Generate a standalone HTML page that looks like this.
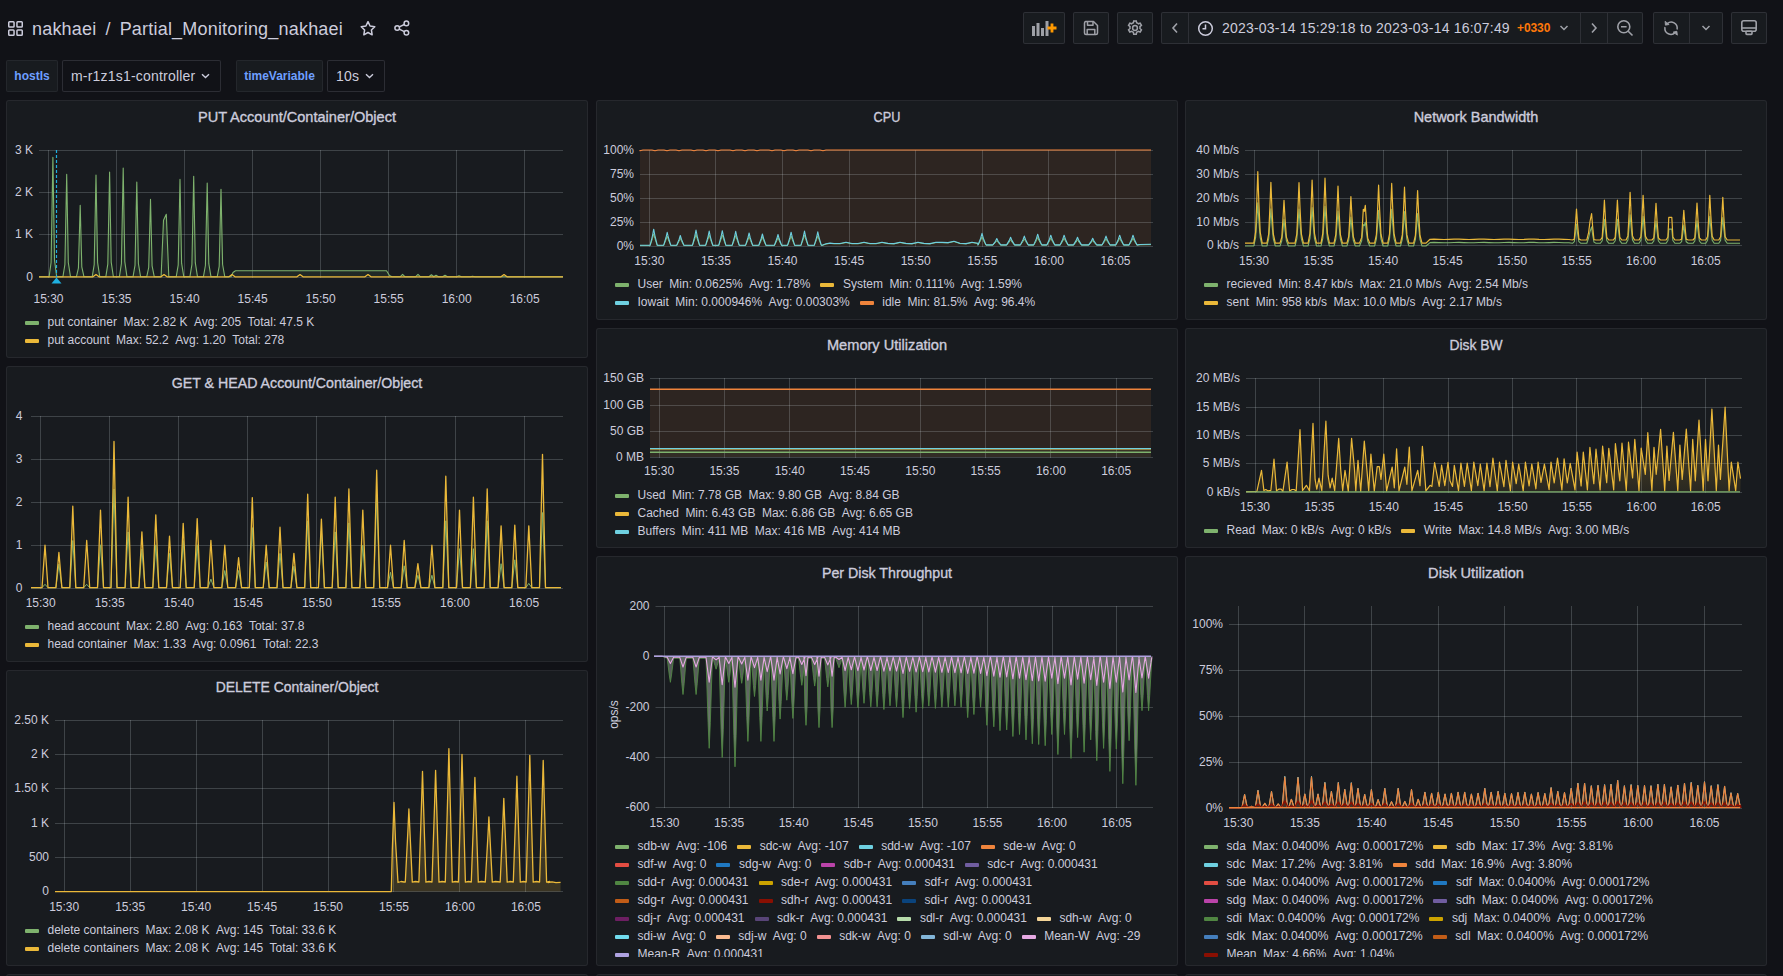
<!DOCTYPE html>
<html><head><meta charset="utf-8"><title>Partial_Monitoring_nakhaei</title>
<style>
html,body{margin:0;padding:0;}
body{width:1783px;height:976px;overflow:hidden;background:#111217;position:relative;font-family:"Liberation Sans", sans-serif;color:#ccccdc;}
.abs{position:absolute;}
.title{left:32px;top:18px;font-size:18px;line-height:22px;white-space:pre;color:#ccccdc;letter-spacing:0.2px}
.btn{position:absolute;top:12px;height:32px;box-sizing:border-box;border:1px solid rgba(204,204,220,0.12);background:#181b1f;border-radius:2px;}
.tp{left:1222px;top:19px;font-size:14px;line-height:18px;white-space:pre;color:#ccccdc;letter-spacing:0.2px}
.tz{left:1517px;top:20px;font-size:12px;line-height:16px;font-weight:bold;color:#FF780A;letter-spacing:-0.1px}
.vlab{position:absolute;top:60px;height:32px;line-height:30px;border:1px solid rgba(204,204,220,0.07);background:#181b1f;border-radius:2px;
 color:#6E9FFF;font-size:12px;font-weight:bold;text-align:center;box-sizing:border-box}
.vsel{position:absolute;top:60px;height:32px;line-height:30px;border:1px solid rgba(204,204,220,0.15);background:#111217;border-radius:2px;
 color:#ccccdc;font-size:14px;padding-left:0;box-sizing:border-box;text-indent:8px;white-space:pre;letter-spacing:0.2px}
.panel{position:absolute;box-sizing:border-box;border:1px solid rgba(204,204,220,0.08);background:#181b1f;border-radius:3px;}
.ptitle{position:absolute;height:20px;line-height:20px;text-align:center;font-size:15px;font-weight:normal;color:#ccccdc;letter-spacing:0px;white-space:pre;-webkit-text-stroke:0.35px #ccccdc;transform:scaleX(0.965)}
svg text{font-family:"Liberation Sans", sans-serif;font-size:12px;fill:#ccccdc;}
.leg{position:absolute;overflow:hidden;font-size:12px;color:#ccccdc;}
.lr{height:18px;line-height:18px;white-space:nowrap;display:flex;align-items:center}
.li{display:inline-flex;align-items:center;margin-right:10px;}
.li i{display:inline-block;width:14px;height:4px;border-radius:1px;margin-right:8.5px;}
.li u{text-decoration:none;position:relative;top:-0.8px;}
.li b{font-weight:normal;margin-left:6.5px;position:relative;top:-0.8px;}
</style></head>
<body>

<svg class="abs" style="left:7.5px;top:20.5px" width="15" height="15" viewBox="0 0 15 15" fill="none" stroke="#ccccdc" stroke-width="1.5">
<rect x="0.75" y="0.75" width="5.3" height="5.3" rx="0.8"/><rect x="8.95" y="0.75" width="5.3" height="5.3" rx="0.8"/>
<rect x="0.75" y="8.95" width="5.3" height="5.3" rx="0.8"/><rect x="8.95" y="8.95" width="5.3" height="5.3" rx="0.8"/></svg>
<div class="abs title">nakhaei<span style="padding:0 9px 0 9px">/</span>Partial_Monitoring_nakhaei</div>
<svg class="abs" style="left:359px;top:20px" width="18" height="17" viewBox="-0.55 -0.5 19.1 18.04" fill="none" stroke="#ccccdc" stroke-width="1.6" stroke-linejoin="round">
<path d="M9 1.3 L11.2 5.9 L16.2 6.6 L12.6 10.1 L13.4 15.2 L9 12.8 L4.6 15.2 L5.4 10.1 L1.8 6.6 L6.8 5.9 Z"/></svg>
<svg class="abs" style="left:393px;top:19px" width="18" height="18" viewBox="0 0 18 18" fill="none" stroke="#ccccdc" stroke-width="1.5">
<circle cx="4.2" cy="9" r="2.3"/><circle cx="13.4" cy="4.4" r="2.3"/><circle cx="13.4" cy="13.7" r="2.3"/>
<path d="M6.3 7.9 L11.3 5.5 M6.3 10.1 L11.3 12.6"/></svg>


<div class="btn" style="left:1023px;width:42px"></div>
<svg class="abs" style="left:1031px;top:20px" width="27" height="17" viewBox="0 0 27 17">
<rect x="1" y="6" width="3" height="10" fill="#9fa1a8"/><rect x="5.5" y="3" width="3" height="13" fill="#9fa1a8"/>
<rect x="10" y="8" width="3" height="8" fill="#9fa1a8"/><rect x="14.5" y="1" width="3" height="15" fill="#9fa1a8"/>
<path d="M21 3.5 V12.5 M16.5 8 H25.5" stroke="#FF9900" stroke-width="2.8"/></svg>
<div class="btn" style="left:1073px;width:36px"></div>
<svg class="abs" style="left:1083px;top:20px" width="16" height="16" viewBox="0 0 16 16" fill="none" stroke="#9fa1a8" stroke-width="1.5" stroke-linejoin="round">
<path d="M2.5 1.5 H10.5 L14.5 5.5 V13 Q14.5 14.5 13 14.5 H3 Q1.5 14.5 1.5 13 V3 Q1.5 1.5 3 1.5 Z"/><path d="M4.5 1.8 V5.3 H10 V1.8"/><path d="M4.2 14.3 V9.5 H11.8 V14.3"/></svg>
<div class="btn" style="left:1117px;width:36px"></div>
<svg class="abs" style="left:1126px;top:19px" width="18" height="18" viewBox="0 0 24 24" fill="none" stroke="#9fa1a8" stroke-width="2">
<circle cx="12" cy="12" r="3.2"/>
<path d="M10.3 2.5 h3.4 l0.5 2.6 a7.5 7.5 0 0 1 2.2 1.3 l2.5-0.9 1.7 2.9-2 1.7 a7.5 7.5 0 0 1 0 2.6 l2 1.7-1.7 2.9-2.5-0.9 a7.5 7.5 0 0 1-2.2 1.3 l-0.5 2.6 h-3.4 l-0.5-2.6 a7.5 7.5 0 0 1-2.2-1.3 l-2.5 0.9-1.7-2.9 2-1.7 a7.5 7.5 0 0 1 0-2.6 l-2-1.7 1.7-2.9 2.5 0.9 a7.5 7.5 0 0 1 2.2-1.3 z"/></svg>
<div class="btn" style="left:1161px;width:482px"></div>
<div class="abs" style="left:1188px;top:13px;width:1px;height:30px;background:rgba(204,204,220,0.12)"></div>
<div class="abs" style="left:1580px;top:13px;width:1px;height:30px;background:rgba(204,204,220,0.12)"></div>
<div class="abs" style="left:1607px;top:13px;width:1px;height:30px;background:rgba(204,204,220,0.12)"></div>
<svg class="abs" style="left:1170px;top:21px" width="10" height="14" viewBox="0 0 10 14" fill="none" stroke="#9fa1a8" stroke-width="1.6"><path d="M7 2.5 L3 7 L7 11.5"/></svg>
<svg class="abs" style="left:1197px;top:20px" width="17" height="17" viewBox="0 0 17 17" fill="none" stroke="#ccccdc" stroke-width="1.5"><circle cx="8.5" cy="8.5" r="6.8"/><path d="M8.5 4.5 V8.8 H5.5"/></svg>
<div class="abs tp">2023-03-14 15:29:18 to 2023-03-14 16:07:49</div>
<div class="abs tz">+0330</div>
<svg class="abs" style="left:1559px;top:24px" width="10" height="8" viewBox="0 0 10 8" fill="none" stroke="#9fa1a8" stroke-width="1.5"><path d="M1.5 2 L5 5.5 L8.5 2"/></svg>
<svg class="abs" style="left:1589px;top:21px" width="10" height="14" viewBox="0 0 10 14" fill="none" stroke="#9fa1a8" stroke-width="1.6"><path d="M3 2.5 L7 7 L3 11.5"/></svg>
<svg class="abs" style="left:1616px;top:19px" width="18" height="18" viewBox="0 0 18 18" fill="none" stroke="#9fa1a8" stroke-width="1.6"><circle cx="7.8" cy="7.8" r="6"/><path d="M5 7.8 H10.6 M12.2 12.2 L16.5 16.5"/></svg>
<div class="btn" style="left:1653px;width:70px"></div>
<div class="abs" style="left:1689px;top:13px;width:1px;height:30px;background:rgba(204,204,220,0.12)"></div>
<svg class="abs" style="left:1662px;top:19px" width="18" height="18" viewBox="0 0 24 24" fill="none" stroke="#9fa1a8" stroke-width="2" stroke-linecap="round">
<path d="M7.2 6.0 A8 8 0 0 1 20.2 13.2"/><path d="M3.9 11.5 A8 8 0 0 0 17.6 18.0"/>
<path d="M4.2 3.6 L4.6 8.2 L9.0 7.4 Z" fill="#9fa1a8" stroke-width="1.2" stroke-linejoin="round"/>
<path d="M20.4 21.0 L19.8 16.4 L15.4 17.4 Z" fill="#9fa1a8" stroke-width="1.2" stroke-linejoin="round"/></svg>
<svg class="abs" style="left:1701px;top:24px" width="10" height="8" viewBox="0 0 10 8" fill="none" stroke="#9fa1a8" stroke-width="1.5"><path d="M1.5 2 L5 5.5 L8.5 2"/></svg>
<div class="btn" style="left:1731px;width:36px"></div>
<svg class="abs" style="left:1740px;top:19px" width="18" height="18" viewBox="0 0 18 18" fill="none" stroke="#9fa1a8" stroke-width="1.6">
<rect x="1.8" y="1.8" width="14.4" height="10.4" rx="2"/><path d="M2 9 H16"/><rect x="6" y="12.2" width="6" height="3.2" rx="0.8"/></svg>


<div class="vlab" style="left:6px;width:52px">hostIs</div>
<div class="vsel" style="left:62px;width:159px">m-r1z1s1-controller<svg width="9" height="6" viewBox="0 0 9 6" fill="none" stroke="#ccccdc" stroke-width="1.4" style="position:absolute;left:138px;top:12px"><path d="M1 1.2 L4.5 4.5 L8 1.2"/></svg></div>
<div class="vlab" style="left:236px;width:87px">timeVariable</div>
<div class="vsel" style="left:327px;width:58px">10s<svg width="9" height="6" viewBox="0 0 9 6" fill="none" stroke="#ccccdc" stroke-width="1.4" style="position:absolute;left:37px;top:12px"><path d="M1 1.2 L4.5 4.5 L8 1.2"/></svg></div>

<div class="panel" style="left:6px;top:100px;width:582px;height:258px"></div><div class="ptitle" style="left:6px;top:106.8px;width:582px;transform:scaleX(0.971)">PUT Account/Container/Object</div><div class="panel" style="left:6px;top:366px;width:582px;height:296px"></div><div class="ptitle" style="left:6px;top:372.8px;width:582px;transform:scaleX(0.946)">GET &amp; HEAD Account/Container/Object</div><div class="panel" style="left:6px;top:670px;width:582px;height:296px"></div><div class="ptitle" style="left:6px;top:676.8px;width:582px;transform:scaleX(0.929)">DELETE Container/Object</div><div class="panel" style="left:596px;top:100px;width:582px;height:220px"></div><div class="ptitle" style="left:596px;top:106.8px;width:582px;transform:scaleX(0.845)">CPU</div><div class="panel" style="left:596px;top:328px;width:582px;height:220px"></div><div class="ptitle" style="left:596px;top:334.8px;width:582px;transform:scaleX(0.974)">Memory Utilization</div><div class="panel" style="left:596px;top:556px;width:582px;height:410px"></div><div class="ptitle" style="left:596px;top:562.8px;width:582px;transform:scaleX(0.947)">Per Disk Throughput</div><div class="panel" style="left:1185px;top:100px;width:582px;height:220px"></div><div class="ptitle" style="left:1185px;top:106.8px;width:582px;transform:scaleX(0.965)">Network Bandwidth</div><div class="panel" style="left:1185px;top:328px;width:582px;height:220px"></div><div class="ptitle" style="left:1185px;top:334.8px;width:582px;transform:scaleX(0.923)">Disk BW</div><div class="panel" style="left:1185px;top:556px;width:582px;height:410px"></div><div class="ptitle" style="left:1185px;top:562.8px;width:582px;transform:scaleX(0.974)">Disk Utilization</div><div class="panel" style="left:6px;top:974px;width:582px;height:60px"></div><div class="panel" style="left:596px;top:974px;width:582px;height:60px"></div><div class="panel" style="left:1185px;top:974px;width:582px;height:60px"></div>
<svg class="abs" style="left:0;top:0" width="1783" height="976" viewBox="0 0 1783 976">
<defs><linearGradient id="g1" gradientUnits="userSpaceOnUse" x1="0" y1="150" x2="0" y2="277"><stop offset="0" stop-color="#7EB26D" stop-opacity="0.2"/><stop offset="1" stop-color="#7EB26D" stop-opacity="0.0"/></linearGradient><linearGradient id="g2" gradientUnits="userSpaceOnUse" x1="0" y1="416" x2="0" y2="588"><stop offset="0" stop-color="#EAB839" stop-opacity="0.2"/><stop offset="1" stop-color="#EAB839" stop-opacity="0.02"/></linearGradient><linearGradient id="g3" gradientUnits="userSpaceOnUse" x1="0" y1="720" x2="0" y2="892"><stop offset="0" stop-color="#EAB839" stop-opacity="0.12"/><stop offset="1" stop-color="#EAB839" stop-opacity="0.0"/></linearGradient><linearGradient id="g4" gradientUnits="userSpaceOnUse" x1="0" y1="656" x2="0" y2="770"><stop offset="0" stop-color="#97a096" stop-opacity="0.45"/><stop offset="1" stop-color="#97a096" stop-opacity="0.85"/></linearGradient><linearGradient id="g5" gradientUnits="userSpaceOnUse" x1="0" y1="170" x2="0" y2="246"><stop offset="0" stop-color="#7EB26D" stop-opacity="0.2"/><stop offset="1" stop-color="#7EB26D" stop-opacity="0.05"/></linearGradient><linearGradient id="g6" gradientUnits="userSpaceOnUse" x1="0" y1="420" x2="0" y2="492"><stop offset="0" stop-color="#EAB839" stop-opacity="0.32"/><stop offset="1" stop-color="#EAB839" stop-opacity="0.08"/></linearGradient><linearGradient id="g7" gradientUnits="userSpaceOnUse" x1="0" y1="760" x2="0" y2="808"><stop offset="0" stop-color="#EF843C" stop-opacity="0.45"/><stop offset="1" stop-color="#EF843C" stop-opacity="0.2"/></linearGradient></defs>
<line x1="39" y1="150.5" x2="563" y2="150.5" stroke="rgba(240,250,255,0.18)" stroke-width="1"/>
<text x="33.0" y="154.3" text-anchor="end">3 K</text>
<line x1="39" y1="192.5" x2="563" y2="192.5" stroke="rgba(240,250,255,0.18)" stroke-width="1"/>
<text x="33.0" y="196.4" text-anchor="end">2 K</text>
<line x1="39" y1="234.5" x2="563" y2="234.5" stroke="rgba(240,250,255,0.18)" stroke-width="1"/>
<text x="33.0" y="238.1" text-anchor="end">1 K</text>
<line x1="39" y1="277.5" x2="563" y2="277.5" stroke="rgba(240,250,255,0.18)" stroke-width="1"/>
<text x="33.0" y="280.8" text-anchor="end">0</text>
<line x1="48.5" y1="150.0" x2="48.5" y2="278.0" stroke="rgba(240,250,255,0.18)" stroke-width="1"/>
<text x="48.5" y="302.5" text-anchor="middle">15:30</text>
<line x1="116.5" y1="150.0" x2="116.5" y2="278.0" stroke="rgba(240,250,255,0.18)" stroke-width="1"/>
<text x="116.5" y="302.5" text-anchor="middle">15:35</text>
<line x1="184.5" y1="150.0" x2="184.5" y2="278.0" stroke="rgba(240,250,255,0.18)" stroke-width="1"/>
<text x="184.6" y="302.5" text-anchor="middle">15:40</text>
<line x1="252.5" y1="150.0" x2="252.5" y2="278.0" stroke="rgba(240,250,255,0.18)" stroke-width="1"/>
<text x="252.6" y="302.5" text-anchor="middle">15:45</text>
<line x1="320.5" y1="150.0" x2="320.5" y2="278.0" stroke="rgba(240,250,255,0.18)" stroke-width="1"/>
<text x="320.6" y="302.5" text-anchor="middle">15:50</text>
<line x1="388.5" y1="150.0" x2="388.5" y2="278.0" stroke="rgba(240,250,255,0.18)" stroke-width="1"/>
<text x="388.6" y="302.5" text-anchor="middle">15:55</text>
<line x1="456.5" y1="150.0" x2="456.5" y2="278.0" stroke="rgba(240,250,255,0.18)" stroke-width="1"/>
<text x="456.7" y="302.5" text-anchor="middle">16:00</text>
<line x1="524.5" y1="150.0" x2="524.5" y2="278.0" stroke="rgba(240,250,255,0.18)" stroke-width="1"/>
<text x="524.7" y="302.5" text-anchor="middle">16:05</text>
<polygon points="39.0,276.8 39.0,276.8 49.1,276.8 51.1,262.4 52.9,157.2 54.5,260.1 56.7,276.8 62.9,276.8 64.9,264.5 66.7,174.4 68.3,262.5 70.5,276.8 76.4,276.8 78.4,268.2 80.2,205.3 81.8,266.8 84.0,276.8 92.2,276.8 94.2,264.6 96.0,175.1 97.6,262.6 99.8,276.8 105.8,276.8 107.8,264.2 109.6,172.0 111.2,262.1 113.4,276.8 119.4,276.8 121.4,263.7 123.2,168.0 124.8,261.6 127.0,276.8 133.0,276.8 135.0,265.4 136.8,182.0 138.4,263.5 140.6,276.8 146.7,276.8 148.7,267.5 150.5,199.2 152.1,265.9 154.3,276.8 161.1,276.8 163.5,220.3 166.3,214.2 168.8,276.8 176.2,276.8 178.2,265.1 180.0,179.4 181.6,263.2 183.8,276.8 189.9,276.8 191.9,264.7 193.7,176.3 195.3,262.7 197.5,276.8 203.4,276.8 205.4,265.5 207.2,183.0 208.8,263.7 211.0,276.8 217.2,276.8 219.2,266.3 221.0,189.2 222.6,264.5 224.8,276.8 231.0,276.8 233.0,272.5 235.5,270.7 386.5,270.7 389.5,275.5 392.0,276.8 400.1,276.8 402.6,274.3 405.1,276.8 415.5,276.8 418.0,274.3 420.5,276.8 428.9,276.8 431.4,274.8 433.9,276.8 433.5,276.8 436.0,275.3 438.5,276.8 442.5,276.8 445.0,275.3 447.5,276.8 456.5,276.8 459.0,275.8 461.5,276.8 470.1,276.8 472.6,276.2 475.1,276.8 563.0,276.8 563.0,276.8" fill="#7EB26D" fill-opacity="0.09" stroke="none"/>
<polygon points="39.0,276.8 39.0,276.8 49.1,276.8 51.1,262.4 52.9,157.2 54.5,260.1 56.7,276.8 62.9,276.8 64.9,264.5 66.7,174.4 68.3,262.5 70.5,276.8 76.4,276.8 78.4,268.2 80.2,205.3 81.8,266.8 84.0,276.8 92.2,276.8 94.2,264.6 96.0,175.1 97.6,262.6 99.8,276.8 105.8,276.8 107.8,264.2 109.6,172.0 111.2,262.1 113.4,276.8 119.4,276.8 121.4,263.7 123.2,168.0 124.8,261.6 127.0,276.8 133.0,276.8 135.0,265.4 136.8,182.0 138.4,263.5 140.6,276.8 146.7,276.8 148.7,267.5 150.5,199.2 152.1,265.9 154.3,276.8 161.1,276.8 163.5,220.3 166.3,214.2 168.8,276.8 176.2,276.8 178.2,265.1 180.0,179.4 181.6,263.2 183.8,276.8 189.9,276.8 191.9,264.7 193.7,176.3 195.3,262.7 197.5,276.8 203.4,276.8 205.4,265.5 207.2,183.0 208.8,263.7 211.0,276.8 217.2,276.8 219.2,266.3 221.0,189.2 222.6,264.5 224.8,276.8 231.0,276.8 233.0,272.5 235.5,270.7 386.5,270.7 389.5,275.5 392.0,276.8 400.1,276.8 402.6,274.3 405.1,276.8 415.5,276.8 418.0,274.3 420.5,276.8 428.9,276.8 431.4,274.8 433.9,276.8 433.5,276.8 436.0,275.3 438.5,276.8 442.5,276.8 445.0,275.3 447.5,276.8 456.5,276.8 459.0,275.8 461.5,276.8 470.1,276.8 472.6,276.2 475.1,276.8 563.0,276.8 563.0,276.8" fill="url(#g1)" stroke="none"/>
<polyline points="39.0,276.8 49.1,276.8 51.1,262.4 52.9,157.2 54.5,260.1 56.7,276.8 62.9,276.8 64.9,264.5 66.7,174.4 68.3,262.5 70.5,276.8 76.4,276.8 78.4,268.2 80.2,205.3 81.8,266.8 84.0,276.8 92.2,276.8 94.2,264.6 96.0,175.1 97.6,262.6 99.8,276.8 105.8,276.8 107.8,264.2 109.6,172.0 111.2,262.1 113.4,276.8 119.4,276.8 121.4,263.7 123.2,168.0 124.8,261.6 127.0,276.8 133.0,276.8 135.0,265.4 136.8,182.0 138.4,263.5 140.6,276.8 146.7,276.8 148.7,267.5 150.5,199.2 152.1,265.9 154.3,276.8 161.1,276.8 163.5,220.3 166.3,214.2 168.8,276.8 176.2,276.8 178.2,265.1 180.0,179.4 181.6,263.2 183.8,276.8 189.9,276.8 191.9,264.7 193.7,176.3 195.3,262.7 197.5,276.8 203.4,276.8 205.4,265.5 207.2,183.0 208.8,263.7 211.0,276.8 217.2,276.8 219.2,266.3 221.0,189.2 222.6,264.5 224.8,276.8 231.0,276.8 233.0,272.5 235.5,270.7 386.5,270.7 389.5,275.5 392.0,276.8 400.1,276.8 402.6,274.3 405.1,276.8 415.5,276.8 418.0,274.3 420.5,276.8 428.9,276.8 431.4,274.8 433.9,276.8 433.5,276.8 436.0,275.3 438.5,276.8 442.5,276.8 445.0,275.3 447.5,276.8 456.5,276.8 459.0,275.8 461.5,276.8 470.1,276.8 472.6,276.2 475.1,276.8 563.0,276.8" fill="none" stroke="#7EB26D" stroke-width="1.1" stroke-linejoin="round" />
<polyline points="39.0,276.8 93.0,276.8 96.0,274.6 99.0,276.8 161.0,276.8 164.0,274.6 167.0,276.8 229.0,276.8 232.0,274.6 235.0,276.8 297.0,276.8 300.0,274.6 303.0,276.8 365.0,276.8 368.0,274.6 371.0,276.8 501.0,276.8 504.0,274.6 507.0,276.8 563.0,276.8" fill="none" stroke="#EAB839" stroke-width="1.3" stroke-linejoin="round" />
<line x1="56.5" y1="150" x2="56.5" y2="277" stroke="#1fb0e0" stroke-width="1.2" stroke-dasharray="3,2"/>
<polygon points="51.5,283.5 61.5,283.5 56.5,277.5" fill="#1fb0e0"/>
<line x1="31" y1="416.5" x2="563" y2="416.5" stroke="rgba(240,250,255,0.18)" stroke-width="1"/>
<text x="22.5" y="419.8" text-anchor="end">4</text>
<line x1="31" y1="459.5" x2="563" y2="459.5" stroke="rgba(240,250,255,0.18)" stroke-width="1"/>
<text x="22.5" y="463.0" text-anchor="end">3</text>
<line x1="31" y1="502.5" x2="563" y2="502.5" stroke="rgba(240,250,255,0.18)" stroke-width="1"/>
<text x="22.5" y="506.0" text-anchor="end">2</text>
<line x1="31" y1="545.5" x2="563" y2="545.5" stroke="rgba(240,250,255,0.18)" stroke-width="1"/>
<text x="22.5" y="549.0" text-anchor="end">1</text>
<line x1="31" y1="588.5" x2="563" y2="588.5" stroke="rgba(240,250,255,0.18)" stroke-width="1"/>
<text x="22.5" y="591.7" text-anchor="end">0</text>
<line x1="40.5" y1="416.0" x2="40.5" y2="589.0" stroke="rgba(240,250,255,0.18)" stroke-width="1"/>
<text x="40.7" y="606.5" text-anchor="middle">15:30</text>
<line x1="109.5" y1="416.0" x2="109.5" y2="589.0" stroke="rgba(240,250,255,0.18)" stroke-width="1"/>
<text x="109.7" y="606.5" text-anchor="middle">15:35</text>
<line x1="178.5" y1="416.0" x2="178.5" y2="589.0" stroke="rgba(240,250,255,0.18)" stroke-width="1"/>
<text x="178.8" y="606.5" text-anchor="middle">15:40</text>
<line x1="247.5" y1="416.0" x2="247.5" y2="589.0" stroke="rgba(240,250,255,0.18)" stroke-width="1"/>
<text x="247.9" y="606.5" text-anchor="middle">15:45</text>
<line x1="316.5" y1="416.0" x2="316.5" y2="589.0" stroke="rgba(240,250,255,0.18)" stroke-width="1"/>
<text x="316.9" y="606.5" text-anchor="middle">15:50</text>
<line x1="385.5" y1="416.0" x2="385.5" y2="589.0" stroke="rgba(240,250,255,0.18)" stroke-width="1"/>
<text x="386.0" y="606.5" text-anchor="middle">15:55</text>
<line x1="455.5" y1="416.0" x2="455.5" y2="589.0" stroke="rgba(240,250,255,0.18)" stroke-width="1"/>
<text x="455.0" y="606.5" text-anchor="middle">16:00</text>
<line x1="524.5" y1="416.0" x2="524.5" y2="589.0" stroke="rgba(240,250,255,0.18)" stroke-width="1"/>
<text x="524.1" y="606.5" text-anchor="middle">16:05</text>
<polygon points="31.0,587.7 31.0,587.7 42.0,587.7 45.0,545.2 48.0,587.7 55.9,587.7 58.9,552.5 61.9,587.7 69.8,587.7 72.8,506.2 75.8,587.7 83.7,587.7 86.7,540.5 89.7,587.7 97.5,587.7 100.5,510.1 103.5,587.7 111.0,587.7 114.0,441.4 117.0,587.7 125.1,587.7 128.1,497.2 131.1,587.7 138.9,587.7 141.9,531.9 144.9,587.7 152.8,587.7 155.8,514.8 158.8,587.7 166.5,587.7 169.5,536.2 172.5,587.7 180.2,587.7 183.2,523.4 186.2,587.7 194.2,587.7 197.2,518.6 200.2,587.7 207.9,587.7 210.9,540.5 213.9,587.7 221.8,587.7 224.8,545.2 227.8,587.7 235.6,587.7 238.6,557.7 241.6,587.7 249.3,587.7 252.3,497.6 255.3,587.7 263.2,587.7 266.2,545.2 269.2,587.7 277.0,587.7 280.0,527.2 283.0,587.7 290.9,587.7 293.9,553.4 296.9,587.7 304.7,587.7 307.7,494.2 310.7,587.7 318.4,587.7 321.4,519.1 324.4,587.7 332.2,587.7 335.2,497.2 338.2,587.7 345.9,587.7 348.9,489.0 351.9,587.7 359.8,587.7 362.8,510.1 365.8,587.7 373.7,587.7 376.7,470.2 379.7,587.7 387.5,587.7 390.5,545.2 393.5,587.7 401.2,587.7 404.2,540.5 407.2,587.7 414.9,587.7 417.9,563.7 420.9,587.7 428.9,587.7 431.9,545.2 434.9,587.7 442.8,587.7 445.8,476.2 448.8,587.7 456.5,587.7 459.5,510.1 462.5,587.7 470.4,587.7 473.4,497.2 476.4,587.7 484.2,587.7 487.2,489.0 490.2,587.7 498.1,587.7 501.1,525.9 504.1,587.7 511.8,587.7 514.8,525.1 517.8,587.7 525.8,587.7 528.8,525.9 531.8,587.7 539.5,587.7 542.5,454.3 545.5,587.7 561.0,587.7 561.0,587.7" fill="url(#g2)" stroke="none"/>
<polyline points="31.0,587.7 42.0,587.7 45.0,584.3 48.0,587.7 55.9,587.7 58.9,564.1 61.9,587.7 69.8,587.7 72.8,540.5 75.8,587.7 83.7,587.7 86.7,584.3 89.7,587.7 97.5,587.7 100.5,544.8 103.5,587.7 111.0,587.7 114.0,489.0 117.0,587.7 125.1,587.7 128.1,531.9 131.1,587.7 138.9,587.7 141.9,549.1 144.9,587.7 152.8,587.7 155.8,544.8 158.8,587.7 166.5,587.7 169.5,553.4 172.5,587.7 180.2,587.7 183.2,540.5 186.2,587.7 194.2,587.7 197.2,544.8 200.2,587.7 207.9,587.7 210.9,579.1 213.9,587.7 221.8,587.7 224.8,570.5 227.8,587.7 235.6,587.7 238.6,570.5 241.6,587.7 249.3,587.7 252.3,527.6 255.3,587.7 263.2,587.7 266.2,562.0 269.2,587.7 277.0,587.7 280.0,553.4 283.0,587.7 290.9,587.7 293.9,566.2 296.9,587.7 304.7,587.7 307.7,520.8 310.7,587.7 318.4,587.7 321.4,531.1 324.4,587.7 332.2,587.7 335.2,531.9 338.2,587.7 345.9,587.7 348.9,522.9 351.9,587.7 359.8,587.7 362.8,545.2 365.8,587.7 373.7,587.7 376.7,494.2 379.7,587.7 387.5,587.7 390.5,572.3 393.5,587.7 401.2,587.7 404.2,565.8 407.2,587.7 414.9,587.7 417.9,575.3 420.9,587.7 428.9,587.7 431.9,575.3 434.9,587.7 442.8,587.7 445.8,520.8 448.8,587.7 456.5,587.7 459.5,548.7 462.5,587.7 470.4,587.7 473.4,548.7 476.4,587.7 484.2,587.7 487.2,520.8 490.2,587.7 498.1,587.7 501.1,563.7 504.1,587.7 511.8,587.7 514.8,559.8 517.8,587.7 525.8,587.7 528.8,583.4 531.8,587.7 539.5,587.7 542.5,512.6 545.5,587.7 561.0,587.7" fill="none" stroke="#7EB26D" stroke-width="1.0" stroke-linejoin="round" />
<polyline points="31.0,587.7 42.0,587.7 45.0,545.2 48.0,587.7 55.9,587.7 58.9,552.5 61.9,587.7 69.8,587.7 72.8,506.2 75.8,587.7 83.7,587.7 86.7,540.5 89.7,587.7 97.5,587.7 100.5,510.1 103.5,587.7 111.0,587.7 114.0,441.4 117.0,587.7 125.1,587.7 128.1,497.2 131.1,587.7 138.9,587.7 141.9,531.9 144.9,587.7 152.8,587.7 155.8,514.8 158.8,587.7 166.5,587.7 169.5,536.2 172.5,587.7 180.2,587.7 183.2,523.4 186.2,587.7 194.2,587.7 197.2,518.6 200.2,587.7 207.9,587.7 210.9,540.5 213.9,587.7 221.8,587.7 224.8,545.2 227.8,587.7 235.6,587.7 238.6,557.7 241.6,587.7 249.3,587.7 252.3,497.6 255.3,587.7 263.2,587.7 266.2,545.2 269.2,587.7 277.0,587.7 280.0,527.2 283.0,587.7 290.9,587.7 293.9,553.4 296.9,587.7 304.7,587.7 307.7,494.2 310.7,587.7 318.4,587.7 321.4,519.1 324.4,587.7 332.2,587.7 335.2,497.2 338.2,587.7 345.9,587.7 348.9,489.0 351.9,587.7 359.8,587.7 362.8,510.1 365.8,587.7 373.7,587.7 376.7,470.2 379.7,587.7 387.5,587.7 390.5,545.2 393.5,587.7 401.2,587.7 404.2,540.5 407.2,587.7 414.9,587.7 417.9,563.7 420.9,587.7 428.9,587.7 431.9,545.2 434.9,587.7 442.8,587.7 445.8,476.2 448.8,587.7 456.5,587.7 459.5,510.1 462.5,587.7 470.4,587.7 473.4,497.2 476.4,587.7 484.2,587.7 487.2,489.0 490.2,587.7 498.1,587.7 501.1,525.9 504.1,587.7 511.8,587.7 514.8,525.1 517.8,587.7 525.8,587.7 528.8,525.9 531.8,587.7 539.5,587.7 542.5,454.3 545.5,587.7 561.0,587.7" fill="none" stroke="#EAB839" stroke-width="1.3" stroke-linejoin="round" />
<line x1="55" y1="720.5" x2="563" y2="720.5" stroke="rgba(240,250,255,0.18)" stroke-width="1"/>
<text x="49.0" y="723.8" text-anchor="end">2.50 K</text>
<line x1="55" y1="754.5" x2="563" y2="754.5" stroke="rgba(240,250,255,0.18)" stroke-width="1"/>
<text x="49.0" y="758.1" text-anchor="end">2 K</text>
<line x1="55" y1="788.5" x2="563" y2="788.5" stroke="rgba(240,250,255,0.18)" stroke-width="1"/>
<text x="49.0" y="792.4" text-anchor="end">1.50 K</text>
<line x1="55" y1="823.5" x2="563" y2="823.5" stroke="rgba(240,250,255,0.18)" stroke-width="1"/>
<text x="49.0" y="826.7" text-anchor="end">1 K</text>
<line x1="55" y1="857.5" x2="563" y2="857.5" stroke="rgba(240,250,255,0.18)" stroke-width="1"/>
<text x="49.0" y="861.0" text-anchor="end">500</text>
<line x1="55" y1="891.5" x2="563" y2="891.5" stroke="rgba(240,250,255,0.18)" stroke-width="1"/>
<text x="49.0" y="895.4" text-anchor="end">0</text>
<line x1="64.5" y1="720.0" x2="64.5" y2="892.0" stroke="rgba(240,250,255,0.18)" stroke-width="1"/>
<text x="64.2" y="910.5" text-anchor="middle">15:30</text>
<line x1="130.5" y1="720.0" x2="130.5" y2="892.0" stroke="rgba(240,250,255,0.18)" stroke-width="1"/>
<text x="130.2" y="910.5" text-anchor="middle">15:35</text>
<line x1="196.5" y1="720.0" x2="196.5" y2="892.0" stroke="rgba(240,250,255,0.18)" stroke-width="1"/>
<text x="196.1" y="910.5" text-anchor="middle">15:40</text>
<line x1="262.5" y1="720.0" x2="262.5" y2="892.0" stroke="rgba(240,250,255,0.18)" stroke-width="1"/>
<text x="262.1" y="910.5" text-anchor="middle">15:45</text>
<line x1="328.5" y1="720.0" x2="328.5" y2="892.0" stroke="rgba(240,250,255,0.18)" stroke-width="1"/>
<text x="328.0" y="910.5" text-anchor="middle">15:50</text>
<line x1="393.5" y1="720.0" x2="393.5" y2="892.0" stroke="rgba(240,250,255,0.18)" stroke-width="1"/>
<text x="394.0" y="910.5" text-anchor="middle">15:55</text>
<line x1="459.5" y1="720.0" x2="459.5" y2="892.0" stroke="rgba(240,250,255,0.18)" stroke-width="1"/>
<text x="459.9" y="910.5" text-anchor="middle">16:00</text>
<line x1="525.5" y1="720.0" x2="525.5" y2="892.0" stroke="rgba(240,250,255,0.18)" stroke-width="1"/>
<text x="525.9" y="910.5" text-anchor="middle">16:05</text>
<polygon points="55.0,891.6 55.0,891.6 391.3,891.6 392.3,850.0 394.0,802.5 395.5,841.0 398.0,882.5 401.0,881.5 404.0,882.0 405.3,882.0 407.9,830.9 408.9,809.0 409.9,830.9 412.3,882.2 415.4,881.5 418.9,882.0 421.5,804.5 422.5,771.3 423.5,804.5 425.9,882.2 429.0,881.5 432.0,882.0 434.6,803.8 435.6,770.3 436.6,803.8 439.0,882.2 442.1,881.5 445.3,882.0 447.9,788.6 448.9,748.6 449.9,788.6 452.3,882.2 455.4,881.5 458.4,882.0 461.0,792.6 462.0,754.3 463.0,792.6 465.4,882.2 468.5,881.5 471.3,882.0 473.9,808.9 474.9,777.5 475.9,808.9 478.3,882.2 481.4,881.5 485.3,882.0 487.9,836.4 488.9,816.8 489.9,836.4 492.3,882.2 495.4,881.5 500.2,882.0 502.8,823.5 503.8,798.4 504.8,823.5 507.2,882.2 510.3,881.5 513.3,882.0 515.9,807.9 516.9,776.2 517.9,807.9 520.3,882.2 523.4,881.5 526.2,882.0 528.8,793.3 529.8,755.3 530.8,793.3 533.2,882.2 536.3,881.5 539.6,882.0 542.2,797.0 543.2,760.5 544.2,797.0 546.6,882.2 549.7,881.5 548.0,882.5 552.0,881.8 556.0,882.6 560.6,882.4 560.6,891.6" fill="#EAB839" fill-opacity="0.16" stroke="none"/>
<polygon points="55.0,891.6 55.0,891.6 391.3,891.6 392.3,850.0 394.0,802.5 395.5,841.0 398.0,882.5 401.0,881.5 404.0,882.0 405.3,882.0 407.9,830.9 408.9,809.0 409.9,830.9 412.3,882.2 415.4,881.5 418.9,882.0 421.5,804.5 422.5,771.3 423.5,804.5 425.9,882.2 429.0,881.5 432.0,882.0 434.6,803.8 435.6,770.3 436.6,803.8 439.0,882.2 442.1,881.5 445.3,882.0 447.9,788.6 448.9,748.6 449.9,788.6 452.3,882.2 455.4,881.5 458.4,882.0 461.0,792.6 462.0,754.3 463.0,792.6 465.4,882.2 468.5,881.5 471.3,882.0 473.9,808.9 474.9,777.5 475.9,808.9 478.3,882.2 481.4,881.5 485.3,882.0 487.9,836.4 488.9,816.8 489.9,836.4 492.3,882.2 495.4,881.5 500.2,882.0 502.8,823.5 503.8,798.4 504.8,823.5 507.2,882.2 510.3,881.5 513.3,882.0 515.9,807.9 516.9,776.2 517.9,807.9 520.3,882.2 523.4,881.5 526.2,882.0 528.8,793.3 529.8,755.3 530.8,793.3 533.2,882.2 536.3,881.5 539.6,882.0 542.2,797.0 543.2,760.5 544.2,797.0 546.6,882.2 549.7,881.5 548.0,882.5 552.0,881.8 556.0,882.6 560.6,882.4 560.6,891.6" fill="url(#g3)" stroke="none"/>
<polyline points="55.0,891.6 391.3,891.6 392.3,850.0 394.0,802.5 395.5,841.0 398.0,882.5 401.0,881.5 404.0,882.0 405.3,882.0 407.9,830.9 408.9,809.0 409.9,830.9 412.3,882.2 415.4,881.5 418.9,882.0 421.5,804.5 422.5,771.3 423.5,804.5 425.9,882.2 429.0,881.5 432.0,882.0 434.6,803.8 435.6,770.3 436.6,803.8 439.0,882.2 442.1,881.5 445.3,882.0 447.9,788.6 448.9,748.6 449.9,788.6 452.3,882.2 455.4,881.5 458.4,882.0 461.0,792.6 462.0,754.3 463.0,792.6 465.4,882.2 468.5,881.5 471.3,882.0 473.9,808.9 474.9,777.5 475.9,808.9 478.3,882.2 481.4,881.5 485.3,882.0 487.9,836.4 488.9,816.8 489.9,836.4 492.3,882.2 495.4,881.5 500.2,882.0 502.8,823.5 503.8,798.4 504.8,823.5 507.2,882.2 510.3,881.5 513.3,882.0 515.9,807.9 516.9,776.2 517.9,807.9 520.3,882.2 523.4,881.5 526.2,882.0 528.8,793.3 529.8,755.3 530.8,793.3 533.2,882.2 536.3,881.5 539.6,882.0 542.2,797.0 543.2,760.5 544.2,797.0 546.6,882.2 549.7,881.5 548.0,882.5 552.0,881.8 556.0,882.6 560.6,882.4" fill="none" stroke="#EAB839" stroke-width="1.3" stroke-linejoin="round" />
<rect x="640" y="150" width="511" height="96" fill="#EF843C" fill-opacity="0.1"/>
<line x1="640" y1="150.5" x2="1153" y2="150.5" stroke="rgba(240,250,255,0.18)" stroke-width="1"/>
<text x="634.0" y="153.6" text-anchor="end">100%</text>
<line x1="640" y1="174.5" x2="1153" y2="174.5" stroke="rgba(240,250,255,0.18)" stroke-width="1"/>
<text x="634.0" y="177.9" text-anchor="end">75%</text>
<line x1="640" y1="198.5" x2="1153" y2="198.5" stroke="rgba(240,250,255,0.18)" stroke-width="1"/>
<text x="634.0" y="202.0" text-anchor="end">50%</text>
<line x1="640" y1="222.5" x2="1153" y2="222.5" stroke="rgba(240,250,255,0.18)" stroke-width="1"/>
<text x="634.0" y="226.2" text-anchor="end">25%</text>
<line x1="640" y1="246.5" x2="1153" y2="246.5" stroke="rgba(240,250,255,0.18)" stroke-width="1"/>
<text x="634.0" y="250.0" text-anchor="end">0%</text>
<line x1="649.5" y1="150.0" x2="649.5" y2="247.0" stroke="rgba(240,250,255,0.18)" stroke-width="1"/>
<text x="649.3" y="264.5" text-anchor="middle">15:30</text>
<line x1="715.5" y1="150.0" x2="715.5" y2="247.0" stroke="rgba(240,250,255,0.18)" stroke-width="1"/>
<text x="715.9" y="264.5" text-anchor="middle">15:35</text>
<line x1="782.5" y1="150.0" x2="782.5" y2="247.0" stroke="rgba(240,250,255,0.18)" stroke-width="1"/>
<text x="782.5" y="264.5" text-anchor="middle">15:40</text>
<line x1="849.5" y1="150.0" x2="849.5" y2="247.0" stroke="rgba(240,250,255,0.18)" stroke-width="1"/>
<text x="849.1" y="264.5" text-anchor="middle">15:45</text>
<line x1="915.5" y1="150.0" x2="915.5" y2="247.0" stroke="rgba(240,250,255,0.18)" stroke-width="1"/>
<text x="915.7" y="264.5" text-anchor="middle">15:50</text>
<line x1="982.5" y1="150.0" x2="982.5" y2="247.0" stroke="rgba(240,250,255,0.18)" stroke-width="1"/>
<text x="982.3" y="264.5" text-anchor="middle">15:55</text>
<line x1="1048.5" y1="150.0" x2="1048.5" y2="247.0" stroke="rgba(240,250,255,0.18)" stroke-width="1"/>
<text x="1048.9" y="264.5" text-anchor="middle">16:00</text>
<line x1="1115.5" y1="150.0" x2="1115.5" y2="247.0" stroke="rgba(240,250,255,0.18)" stroke-width="1"/>
<text x="1115.5" y="264.5" text-anchor="middle">16:05</text>
<polyline points="640.0,150.0 640.0,150.7 643.0,150.0 646.0,150.0 649.0,150.0 652.0,150.0 655.0,150.7 658.0,150.0 661.0,150.0 664.0,150.0 667.0,150.7 670.0,150.0 673.0,150.0 676.0,150.0 679.0,150.7 682.0,150.0 685.0,150.0 688.0,150.0 691.0,150.0 694.0,150.7 697.0,150.0 700.0,150.0 703.0,150.0 706.0,150.7 709.0,150.0 712.0,150.0 715.0,150.0 718.0,150.7 721.0,150.0 724.0,150.0 727.0,150.0 730.0,150.0 733.0,150.7 736.0,150.0 739.0,150.0 742.0,150.0 745.0,150.7 748.0,150.0 751.0,150.0 754.0,150.0 757.0,150.7 760.0,150.0 763.0,150.0 766.0,150.0 769.0,150.0 772.0,150.7 775.0,150.0 778.0,150.0 781.0,150.0 784.0,150.7 787.0,150.0 790.0,150.0 793.0,150.0 796.0,150.7 799.0,150.0 802.0,150.0 805.0,150.0 808.0,150.0 811.0,150.7 814.0,150.0 817.0,150.0 820.0,150.0 823.0,150.7 826.0,150.0 829.0,150.0 832.0,150.0 835.0,150.0 838.0,150.0 841.0,150.0 844.0,150.0 847.0,150.0 850.0,150.0 853.0,150.0 856.0,150.0 859.0,150.0 862.0,150.0 865.0,150.0 868.0,150.0 871.0,150.0 874.0,150.0 877.0,150.0 880.0,150.0 883.0,150.0 886.0,150.0 889.0,150.0 892.0,150.0 895.0,150.0 898.0,150.0 901.0,150.0 904.0,150.0 907.0,150.0 910.0,150.0 913.0,150.0 916.0,150.0 919.0,150.0 922.0,150.0 925.0,150.0 928.0,150.0 931.0,150.0 934.0,150.0 937.0,150.0 940.0,150.0 943.0,150.0 946.0,150.0 949.0,150.0 952.0,150.0 955.0,150.0 958.0,150.0 961.0,150.0 964.0,150.0 967.0,150.0 970.0,150.0 973.0,150.0 976.0,150.0 979.0,150.0 982.0,150.0 985.0,150.0 988.0,150.0 991.0,150.0 994.0,150.0 997.0,150.0 1000.0,150.0 1003.0,150.0 1006.0,150.0 1009.0,150.0 1012.0,150.0 1015.0,150.0 1018.0,150.0 1021.0,150.0 1024.0,150.0 1027.0,150.0 1030.0,150.0 1033.0,150.0 1036.0,150.0 1039.0,150.0 1042.0,150.0 1045.0,150.0 1048.0,150.0 1051.0,150.0 1054.0,150.0 1057.0,150.0 1060.0,150.0 1063.0,150.0 1066.0,150.0 1069.0,150.0 1072.0,150.0 1075.0,150.0 1078.0,150.0 1081.0,150.0 1084.0,150.0 1087.0,150.0 1090.0,150.0 1093.0,150.0 1096.0,150.0 1099.0,150.0 1102.0,150.0 1105.0,150.0 1108.0,150.0 1111.0,150.0 1114.0,150.0 1117.0,150.0 1120.0,150.0 1123.0,150.0 1126.0,150.0 1129.0,150.0 1132.0,150.0 1135.0,150.0 1138.0,150.0 1141.0,150.0 1144.0,150.0 1147.0,150.0 1150.0,150.0 1151.0,150.0" fill="none" stroke="#EF843C" stroke-width="1.15" stroke-linejoin="round" />
<polyline points="640.0,245.6 650.1,245.6 652.5,238.5 653.7,233.8 654.9,238.5 657.3,245.6 663.6,245.6 666.0,239.9 667.2,236.0 668.4,239.9 670.8,245.6 676.7,245.6 679.1,241.2 680.3,238.3 681.5,241.2 683.9,245.6 692.4,245.6 694.8,238.9 696.0,234.4 697.2,238.9 699.6,245.6 705.6,245.6 708.0,239.3 709.2,235.2 710.4,239.3 712.8,245.6 718.7,245.6 721.1,239.2 722.3,234.9 723.5,239.2 725.9,245.6 732.1,245.6 734.5,239.5 735.7,235.4 736.9,239.5 739.3,245.6 745.5,245.6 747.9,240.2 749.1,236.5 750.3,240.2 752.7,245.6 758.8,245.6 761.2,240.6 762.4,237.2 763.6,240.6 766.0,245.6 774.4,245.6 776.8,240.8 778.0,237.6 779.2,240.8 781.6,245.6 787.5,245.6 789.9,239.8 791.1,236.0 792.3,239.8 794.7,245.6 800.9,245.6 803.3,239.3 804.5,235.2 805.7,239.3 808.1,245.6 814.2,245.6 816.6,239.7 817.8,235.7 819.0,239.7 821.4,245.6 822.0,245.6 826.0,244.1 830.0,243.4 834.0,243.8 840.0,243.8 846.0,242.6 852.0,243.8 858.0,243.8 864.0,242.6 870.0,243.8 876.0,243.8 882.0,242.6 888.0,243.7 894.0,243.9 900.0,242.6 906.0,243.7 912.0,243.9 918.0,242.6 924.0,243.7 930.0,243.9 936.0,242.6 942.0,242.7 948.0,242.9 954.0,241.6 960.0,243.6 966.0,243.9 972.0,242.6 978.0,243.6 978.0,245.2 980.7,240.3 982.0,236.8 983.3,240.3 986.0,245.2 992.8,245.2 995.5,242.6 996.8,240.6 998.1,242.6 1000.8,245.2 1006.6,245.2 1009.3,242.0 1010.6,239.6 1011.9,242.0 1014.6,245.2 1020.3,245.2 1023.0,241.5 1024.3,238.8 1025.6,241.5 1028.3,245.2 1033.7,245.2 1036.4,240.7 1037.7,237.4 1039.0,240.7 1041.7,245.2 1046.8,245.2 1049.5,241.1 1050.8,238.1 1052.1,241.1 1054.8,245.2 1060.1,245.2 1062.8,241.1 1064.1,238.1 1065.4,241.1 1068.1,245.2 1073.5,245.2 1076.2,242.0 1077.5,239.6 1078.8,242.0 1081.5,245.2 1088.7,245.2 1091.4,242.4 1092.7,240.3 1094.0,242.4 1096.7,245.2 1102.0,245.2 1104.7,241.5 1106.0,238.8 1107.3,241.5 1110.0,245.2 1115.7,245.2 1118.4,241.1 1119.7,238.1 1121.0,241.1 1123.7,245.2 1129.0,245.2 1131.7,241.1 1133.0,238.1 1134.3,241.1 1137.0,245.2 1140.0,244.8 1151.0,244.6" fill="none" stroke="#7EB26D" stroke-width="1.0" stroke-linejoin="round" />
<polyline points="640.0,245.3 650.1,245.3 652.5,235.6 653.7,229.2 654.9,235.6 657.3,245.3 663.6,245.3 666.0,237.5 667.2,232.3 668.4,237.5 670.8,245.3 676.7,245.3 679.1,239.4 680.3,235.5 681.5,239.4 683.9,245.3 692.4,245.3 694.8,236.2 696.0,230.1 697.2,236.2 699.6,245.3 705.6,245.3 708.0,236.8 709.2,231.1 710.4,236.8 712.8,245.3 718.7,245.3 721.1,236.5 722.3,230.7 723.5,236.5 725.9,245.3 732.1,245.3 734.5,237.0 735.7,231.4 736.9,237.0 739.3,245.3 745.5,245.3 747.9,237.9 749.1,233.0 750.3,237.9 752.7,245.3 758.8,245.3 761.2,238.5 762.4,234.0 763.6,238.5 766.0,245.3 774.4,245.3 776.8,238.8 778.0,234.5 779.2,238.8 781.6,245.3 787.5,245.3 789.9,237.4 791.1,232.2 792.3,237.4 794.7,245.3 800.9,245.3 803.3,236.8 804.5,231.1 805.7,236.8 808.1,245.3 814.2,245.3 816.6,237.3 817.8,231.9 819.0,237.3 821.4,245.3 822.0,245.3 826.0,243.8 830.0,243.1 834.0,243.5 840.0,243.5 846.0,242.3 852.0,243.5 858.0,243.5 864.0,242.3 870.0,243.5 876.0,243.5 882.0,242.3 888.0,243.4 894.0,243.6 900.0,242.3 906.0,243.4 912.0,243.6 918.0,242.3 924.0,243.4 930.0,243.6 936.0,242.3 942.0,242.4 948.0,242.6 954.0,241.3 960.0,243.3 966.0,243.6 972.0,242.3 978.0,243.3 978.0,244.9 980.7,238.2 982.0,233.4 983.3,238.2 986.0,244.9 992.8,244.9 995.5,241.3 996.8,238.6 998.1,241.3 1000.8,244.9 1006.6,244.9 1009.3,240.4 1010.6,237.2 1011.9,240.4 1014.6,244.9 1020.3,244.9 1023.0,239.8 1024.3,236.1 1025.6,239.8 1028.3,244.9 1033.7,244.9 1036.4,238.6 1037.7,234.2 1039.0,238.6 1041.7,244.9 1046.8,244.9 1049.5,239.2 1050.8,235.2 1052.1,239.2 1054.8,244.9 1060.1,244.9 1062.8,239.2 1064.1,235.2 1065.4,239.2 1068.1,244.9 1073.5,244.9 1076.2,240.4 1077.5,237.2 1078.8,240.4 1081.5,244.9 1088.7,244.9 1091.4,241.1 1092.7,238.3 1094.0,241.1 1096.7,244.9 1102.0,244.9 1104.7,239.8 1106.0,236.1 1107.3,239.8 1110.0,244.9 1115.7,244.9 1118.4,239.2 1119.7,235.2 1121.0,239.2 1123.7,244.9 1129.0,244.9 1131.7,239.2 1133.0,235.2 1134.3,239.2 1137.0,244.9 1140.0,244.5 1151.0,244.3" fill="none" stroke="#6ED0E0" stroke-width="1.1" stroke-linejoin="round" />
<rect x="650" y="389" width="501" height="68" fill="#EF843C" fill-opacity="0.1"/>
<rect x="650" y="449" width="501" height="8" fill="#7EB26D" fill-opacity="0.06"/>
<line x1="650" y1="378.5" x2="1153" y2="378.5" stroke="rgba(240,250,255,0.18)" stroke-width="1"/>
<text x="644.0" y="382.0" text-anchor="end">150 GB</text>
<line x1="650" y1="405.5" x2="1153" y2="405.5" stroke="rgba(240,250,255,0.18)" stroke-width="1"/>
<text x="644.0" y="408.7" text-anchor="end">100 GB</text>
<line x1="650" y1="431.5" x2="1153" y2="431.5" stroke="rgba(240,250,255,0.18)" stroke-width="1"/>
<text x="644.0" y="435.0" text-anchor="end">50 GB</text>
<line x1="650" y1="457.5" x2="1153" y2="457.5" stroke="rgba(240,250,255,0.18)" stroke-width="1"/>
<text x="644.0" y="461.1" text-anchor="end">0 MB</text>
<line x1="659.5" y1="378.0" x2="659.5" y2="458.0" stroke="rgba(240,250,255,0.18)" stroke-width="1"/>
<text x="659.1" y="474.5" text-anchor="middle">15:30</text>
<line x1="724.5" y1="378.0" x2="724.5" y2="458.0" stroke="rgba(240,250,255,0.18)" stroke-width="1"/>
<text x="724.4" y="474.5" text-anchor="middle">15:35</text>
<line x1="789.5" y1="378.0" x2="789.5" y2="458.0" stroke="rgba(240,250,255,0.18)" stroke-width="1"/>
<text x="789.7" y="474.5" text-anchor="middle">15:40</text>
<line x1="855.5" y1="378.0" x2="855.5" y2="458.0" stroke="rgba(240,250,255,0.18)" stroke-width="1"/>
<text x="855.0" y="474.5" text-anchor="middle">15:45</text>
<line x1="920.5" y1="378.0" x2="920.5" y2="458.0" stroke="rgba(240,250,255,0.18)" stroke-width="1"/>
<text x="920.3" y="474.5" text-anchor="middle">15:50</text>
<line x1="985.5" y1="378.0" x2="985.5" y2="458.0" stroke="rgba(240,250,255,0.18)" stroke-width="1"/>
<text x="985.6" y="474.5" text-anchor="middle">15:55</text>
<line x1="1050.5" y1="378.0" x2="1050.5" y2="458.0" stroke="rgba(240,250,255,0.18)" stroke-width="1"/>
<text x="1050.9" y="474.5" text-anchor="middle">16:00</text>
<line x1="1116.5" y1="378.0" x2="1116.5" y2="458.0" stroke="rgba(240,250,255,0.18)" stroke-width="1"/>
<text x="1116.2" y="474.5" text-anchor="middle">16:05</text>
<line x1="650" y1="389.2" x2="1151" y2="389.2" stroke="#EF843C" stroke-width="1.6"/>
<line x1="650" y1="448.7" x2="1151" y2="448.7" stroke="#6ED0E0" stroke-width="1.2"/>
<line x1="650" y1="449.6" x2="1151" y2="449.6" stroke="#EAB839" stroke-width="0.8" stroke-opacity="0.7"/>
<line x1="650" y1="452.3" x2="1151" y2="452.3" stroke="#7EB26D" stroke-width="1.4"/>
<line x1="655.5" y1="606.5" x2="1153" y2="606.5" stroke="rgba(240,250,255,0.18)" stroke-width="1"/>
<text x="649.5" y="609.9" text-anchor="end">200</text>
<line x1="655.5" y1="656.5" x2="1153" y2="656.5" stroke="rgba(240,250,255,0.18)" stroke-width="1"/>
<text x="649.5" y="660.3" text-anchor="end">0</text>
<line x1="655.5" y1="707.5" x2="1153" y2="707.5" stroke="rgba(240,250,255,0.18)" stroke-width="1"/>
<text x="649.5" y="710.7" text-anchor="end">-200</text>
<line x1="655.5" y1="757.5" x2="1153" y2="757.5" stroke="rgba(240,250,255,0.18)" stroke-width="1"/>
<text x="649.5" y="761.1" text-anchor="end">-400</text>
<line x1="655.5" y1="807.5" x2="1153" y2="807.5" stroke="rgba(240,250,255,0.18)" stroke-width="1"/>
<text x="649.5" y="811.4" text-anchor="end">-600</text>
<line x1="664.5" y1="606.0" x2="664.5" y2="808.0" stroke="rgba(240,250,255,0.18)" stroke-width="1"/>
<text x="664.5" y="826.5" text-anchor="middle">15:30</text>
<line x1="729.5" y1="606.0" x2="729.5" y2="808.0" stroke="rgba(240,250,255,0.18)" stroke-width="1"/>
<text x="729.1" y="826.5" text-anchor="middle">15:35</text>
<line x1="793.5" y1="606.0" x2="793.5" y2="808.0" stroke="rgba(240,250,255,0.18)" stroke-width="1"/>
<text x="793.7" y="826.5" text-anchor="middle">15:40</text>
<line x1="858.5" y1="606.0" x2="858.5" y2="808.0" stroke="rgba(240,250,255,0.18)" stroke-width="1"/>
<text x="858.3" y="826.5" text-anchor="middle">15:45</text>
<line x1="922.5" y1="606.0" x2="922.5" y2="808.0" stroke="rgba(240,250,255,0.18)" stroke-width="1"/>
<text x="922.9" y="826.5" text-anchor="middle">15:50</text>
<line x1="987.5" y1="606.0" x2="987.5" y2="808.0" stroke="rgba(240,250,255,0.18)" stroke-width="1"/>
<text x="987.5" y="826.5" text-anchor="middle">15:55</text>
<line x1="1052.5" y1="606.0" x2="1052.5" y2="808.0" stroke="rgba(240,250,255,0.18)" stroke-width="1"/>
<text x="1052.0" y="826.5" text-anchor="middle">16:00</text>
<line x1="1116.5" y1="606.0" x2="1116.5" y2="808.0" stroke="rgba(240,250,255,0.18)" stroke-width="1"/>
<text x="1116.6" y="826.5" text-anchor="middle">16:05</text>
<text transform="translate(617.5,714.5) rotate(-90)" text-anchor="middle">ops/s</text>
<polygon points="654.0,656.3 654.0,656.3 662.0,656.3 667.2,658.3 669.3,675.0 670.4,682.3 671.5,675.0 673.6,658.3 679.8,658.3 681.9,683.8 683.0,694.5 684.1,683.8 686.2,658.3 692.9,658.3 695.0,683.8 696.1,694.5 697.2,683.8 699.3,658.3 706.0,658.3 708.1,722.6 709.2,748.3 710.3,722.6 712.4,658.3 712.9,658.3 715.0,665.6 716.1,669.2 717.2,665.6 719.3,658.3 719.1,658.3 721.1,729.2 722.2,757.5 723.3,729.2 725.3,658.3 725.6,658.3 727.7,675.0 728.8,682.3 729.9,675.0 732.0,658.3 731.9,658.3 733.9,735.8 735.0,766.8 736.1,735.8 738.0,658.3 738.5,658.3 740.6,675.8 741.7,683.3 742.8,675.8 744.9,658.3 744.8,658.3 746.8,717.6 747.9,741.4 749.0,717.6 751.0,658.3 751.3,658.3 753.4,685.3 754.5,696.5 755.6,685.3 757.7,658.3 757.7,658.3 759.8,717.6 760.9,741.4 762.0,717.6 764.1,658.3 764.1,658.3 766.1,695.7 767.2,711.0 768.3,695.7 770.4,658.3 770.8,658.3 772.9,717.6 774.0,741.4 775.1,717.6 777.2,658.3 777.1,658.3 779.0,701.5 780.1,719.1 781.2,701.5 783.2,658.3 783.6,658.3 785.7,687.9 786.8,700.2 787.9,687.9 790.0,658.3 789.8,658.3 791.8,701.0 792.9,718.4 794.0,701.0 796.0,658.3 798.6,658.3 800.7,677.2 801.8,685.3 802.9,677.2 805.0,658.3 803.9,658.3 804.9,706.0 806.0,725.3 807.1,706.0 808.0,658.3 811.5,658.3 813.6,677.8 814.7,686.1 815.8,677.8 817.9,658.3 816.9,658.3 817.9,707.6 819.0,727.6 820.1,707.6 821.2,658.3 824.6,658.3 826.7,678.3 827.8,686.9 828.9,678.3 831.0,658.3 829.9,658.3 831.0,707.6 832.1,727.6 833.2,707.6 834.2,658.3 835.8,658.3 837.9,664.5 839.0,667.7 840.1,664.5 842.2,658.3 842.1,658.3 844.0,693.0 845.1,707.3 846.2,693.0 848.2,658.3 848.2,658.3 850.2,691.0 851.3,704.5 852.4,691.0 854.4,658.3 854.7,658.3 856.8,693.2 857.9,707.6 859.0,693.2 861.1,658.3 861.0,658.3 862.9,690.1 864.0,703.3 865.1,690.1 867.1,658.3 867.6,658.3 869.7,692.7 870.8,706.8 871.9,692.7 874.0,658.3 874.0,658.3 876.0,692.7 877.1,706.8 878.2,692.7 880.3,658.3 880.7,658.3 882.8,694.6 883.9,709.5 885.0,694.6 887.1,658.3 886.9,658.3 888.9,691.9 890.0,705.8 891.1,691.9 893.1,658.3 893.3,658.3 895.4,692.7 896.5,706.9 897.6,692.7 899.7,658.3 899.8,658.3 901.9,700.5 903.0,717.6 904.1,700.5 906.2,658.3 906.4,658.3 908.5,693.8 909.6,708.4 910.7,693.8 912.8,658.3 912.9,658.3 915.0,696.6 916.1,712.2 917.2,696.6 919.3,658.3 919.5,658.3 921.6,693.8 922.7,708.4 923.8,693.8 925.9,658.3 925.7,658.3 927.7,692.2 928.8,706.1 929.9,692.2 931.9,658.3 932.2,658.3 934.3,693.8 935.4,708.4 936.5,693.8 938.6,658.3 938.7,658.3 940.8,692.9 941.9,707.2 943.0,692.9 945.1,658.3 945.1,658.3 947.2,692.9 948.3,707.2 949.4,692.9 951.5,658.3 951.7,658.3 953.8,691.9 954.9,705.8 956.0,691.9 958.1,658.3 958.0,658.3 960.0,692.9 961.1,707.2 962.2,692.9 964.2,658.3 964.5,658.3 966.6,700.5 967.7,717.6 968.8,700.5 970.9,658.3 970.8,658.3 972.8,698.2 973.9,714.5 975.0,698.2 976.9,658.3 977.4,658.3 979.5,692.9 980.6,707.2 981.7,692.9 983.8,658.3 983.8,658.3 985.8,706.0 986.9,725.3 988.0,706.0 990.1,658.3 990.6,658.3 992.7,707.1 993.8,726.8 994.9,707.1 997.0,658.3 996.9,658.3 998.9,709.9 1000.0,730.7 1001.1,709.9 1003.1,658.3 1003.5,658.3 1005.6,709.3 1006.7,729.9 1007.8,709.3 1009.9,658.3 1009.8,658.3 1011.8,714.1 1012.9,736.5 1014.0,714.1 1016.0,658.3 1016.3,658.3 1018.4,712.6 1019.5,734.5 1020.6,712.6 1022.7,658.3 1022.8,658.3 1024.9,716.5 1026.0,739.9 1027.1,716.5 1029.2,658.3 1029.1,658.3 1031.2,719.3 1032.3,743.8 1033.4,719.3 1035.4,658.3 1035.5,658.3 1037.6,719.8 1038.7,744.5 1039.8,719.8 1041.9,658.3 1042.0,658.3 1044.1,720.7 1045.2,745.7 1046.3,720.7 1048.4,658.3 1048.6,658.3 1050.7,712.6 1051.8,734.5 1052.9,712.6 1055.0,658.3 1054.9,658.3 1056.8,727.0 1057.9,754.5 1059.0,727.0 1061.0,658.3 1061.3,658.3 1063.4,712.6 1064.5,734.5 1065.6,712.6 1067.7,658.3 1067.8,658.3 1069.9,729.8 1071.0,758.4 1072.1,729.8 1074.2,658.3 1074.4,658.3 1076.5,714.8 1077.6,737.6 1078.7,714.8 1080.8,658.3 1080.9,658.3 1083.0,725.4 1084.1,752.2 1085.2,725.4 1087.3,658.3 1087.5,658.3 1089.6,716.5 1090.7,739.9 1091.8,716.5 1093.9,658.3 1093.7,658.3 1095.7,731.4 1096.8,760.7 1097.9,731.4 1099.9,658.3 1100.4,658.3 1102.5,722.6 1103.6,748.4 1104.7,722.6 1106.8,658.3 1106.7,658.3 1108.8,739.2 1109.9,771.4 1111.0,739.2 1113.0,658.3 1113.1,658.3 1115.2,723.1 1116.3,749.1 1117.4,723.1 1119.5,658.3 1119.6,658.3 1121.7,748.0 1122.8,783.7 1123.9,748.0 1126.0,658.3 1125.9,658.3 1128.0,717.1 1129.1,740.7 1130.2,717.1 1132.2,658.3 1132.7,658.3 1134.8,749.1 1135.9,785.3 1137.0,749.1 1139.1,658.3 1138.9,658.3 1140.9,695.5 1142.0,710.7 1143.1,695.5 1145.1,658.3 1145.4,658.3 1147.5,695.5 1148.6,710.7 1149.7,695.5 1151.8,658.3 1151.0,666.3 1151.0,656.3" fill="url(#g4)" stroke="none"/>
<polyline points="654.0,656.3 662.0,656.3 667.2,658.3 669.3,675.0 670.4,682.3 671.5,675.0 673.6,658.3 679.8,658.3 681.9,683.8 683.0,694.5 684.1,683.8 686.2,658.3 692.9,658.3 695.0,683.8 696.1,694.5 697.2,683.8 699.3,658.3 706.0,658.3 708.1,722.6 709.2,748.3 710.3,722.6 712.4,658.3 712.9,658.3 715.0,665.6 716.1,669.2 717.2,665.6 719.3,658.3 719.1,658.3 721.1,729.2 722.2,757.5 723.3,729.2 725.3,658.3 725.6,658.3 727.7,675.0 728.8,682.3 729.9,675.0 732.0,658.3 731.9,658.3 733.9,735.8 735.0,766.8 736.1,735.8 738.0,658.3 738.5,658.3 740.6,675.8 741.7,683.3 742.8,675.8 744.9,658.3 744.8,658.3 746.8,717.6 747.9,741.4 749.0,717.6 751.0,658.3 751.3,658.3 753.4,685.3 754.5,696.5 755.6,685.3 757.7,658.3 757.7,658.3 759.8,717.6 760.9,741.4 762.0,717.6 764.1,658.3 764.1,658.3 766.1,695.7 767.2,711.0 768.3,695.7 770.4,658.3 770.8,658.3 772.9,717.6 774.0,741.4 775.1,717.6 777.2,658.3 777.1,658.3 779.0,701.5 780.1,719.1 781.2,701.5 783.2,658.3 783.6,658.3 785.7,687.9 786.8,700.2 787.9,687.9 790.0,658.3 789.8,658.3 791.8,701.0 792.9,718.4 794.0,701.0 796.0,658.3 798.6,658.3 800.7,677.2 801.8,685.3 802.9,677.2 805.0,658.3 803.9,658.3 804.9,706.0 806.0,725.3 807.1,706.0 808.0,658.3 811.5,658.3 813.6,677.8 814.7,686.1 815.8,677.8 817.9,658.3 816.9,658.3 817.9,707.6 819.0,727.6 820.1,707.6 821.2,658.3 824.6,658.3 826.7,678.3 827.8,686.9 828.9,678.3 831.0,658.3 829.9,658.3 831.0,707.6 832.1,727.6 833.2,707.6 834.2,658.3 835.8,658.3 837.9,664.5 839.0,667.7 840.1,664.5 842.2,658.3 842.1,658.3 844.0,693.0 845.1,707.3 846.2,693.0 848.2,658.3 848.2,658.3 850.2,691.0 851.3,704.5 852.4,691.0 854.4,658.3 854.7,658.3 856.8,693.2 857.9,707.6 859.0,693.2 861.1,658.3 861.0,658.3 862.9,690.1 864.0,703.3 865.1,690.1 867.1,658.3 867.6,658.3 869.7,692.7 870.8,706.8 871.9,692.7 874.0,658.3 874.0,658.3 876.0,692.7 877.1,706.8 878.2,692.7 880.3,658.3 880.7,658.3 882.8,694.6 883.9,709.5 885.0,694.6 887.1,658.3 886.9,658.3 888.9,691.9 890.0,705.8 891.1,691.9 893.1,658.3 893.3,658.3 895.4,692.7 896.5,706.9 897.6,692.7 899.7,658.3 899.8,658.3 901.9,700.5 903.0,717.6 904.1,700.5 906.2,658.3 906.4,658.3 908.5,693.8 909.6,708.4 910.7,693.8 912.8,658.3 912.9,658.3 915.0,696.6 916.1,712.2 917.2,696.6 919.3,658.3 919.5,658.3 921.6,693.8 922.7,708.4 923.8,693.8 925.9,658.3 925.7,658.3 927.7,692.2 928.8,706.1 929.9,692.2 931.9,658.3 932.2,658.3 934.3,693.8 935.4,708.4 936.5,693.8 938.6,658.3 938.7,658.3 940.8,692.9 941.9,707.2 943.0,692.9 945.1,658.3 945.1,658.3 947.2,692.9 948.3,707.2 949.4,692.9 951.5,658.3 951.7,658.3 953.8,691.9 954.9,705.8 956.0,691.9 958.1,658.3 958.0,658.3 960.0,692.9 961.1,707.2 962.2,692.9 964.2,658.3 964.5,658.3 966.6,700.5 967.7,717.6 968.8,700.5 970.9,658.3 970.8,658.3 972.8,698.2 973.9,714.5 975.0,698.2 976.9,658.3 977.4,658.3 979.5,692.9 980.6,707.2 981.7,692.9 983.8,658.3 983.8,658.3 985.8,706.0 986.9,725.3 988.0,706.0 990.1,658.3 990.6,658.3 992.7,707.1 993.8,726.8 994.9,707.1 997.0,658.3 996.9,658.3 998.9,709.9 1000.0,730.7 1001.1,709.9 1003.1,658.3 1003.5,658.3 1005.6,709.3 1006.7,729.9 1007.8,709.3 1009.9,658.3 1009.8,658.3 1011.8,714.1 1012.9,736.5 1014.0,714.1 1016.0,658.3 1016.3,658.3 1018.4,712.6 1019.5,734.5 1020.6,712.6 1022.7,658.3 1022.8,658.3 1024.9,716.5 1026.0,739.9 1027.1,716.5 1029.2,658.3 1029.1,658.3 1031.2,719.3 1032.3,743.8 1033.4,719.3 1035.4,658.3 1035.5,658.3 1037.6,719.8 1038.7,744.5 1039.8,719.8 1041.9,658.3 1042.0,658.3 1044.1,720.7 1045.2,745.7 1046.3,720.7 1048.4,658.3 1048.6,658.3 1050.7,712.6 1051.8,734.5 1052.9,712.6 1055.0,658.3 1054.9,658.3 1056.8,727.0 1057.9,754.5 1059.0,727.0 1061.0,658.3 1061.3,658.3 1063.4,712.6 1064.5,734.5 1065.6,712.6 1067.7,658.3 1067.8,658.3 1069.9,729.8 1071.0,758.4 1072.1,729.8 1074.2,658.3 1074.4,658.3 1076.5,714.8 1077.6,737.6 1078.7,714.8 1080.8,658.3 1080.9,658.3 1083.0,725.4 1084.1,752.2 1085.2,725.4 1087.3,658.3 1087.5,658.3 1089.6,716.5 1090.7,739.9 1091.8,716.5 1093.9,658.3 1093.7,658.3 1095.7,731.4 1096.8,760.7 1097.9,731.4 1099.9,658.3 1100.4,658.3 1102.5,722.6 1103.6,748.4 1104.7,722.6 1106.8,658.3 1106.7,658.3 1108.8,739.2 1109.9,771.4 1111.0,739.2 1113.0,658.3 1113.1,658.3 1115.2,723.1 1116.3,749.1 1117.4,723.1 1119.5,658.3 1119.6,658.3 1121.7,748.0 1122.8,783.7 1123.9,748.0 1126.0,658.3 1125.9,658.3 1128.0,717.1 1129.1,740.7 1130.2,717.1 1132.2,658.3 1132.7,658.3 1134.8,749.1 1135.9,785.3 1137.0,749.1 1139.1,658.3 1138.9,658.3 1140.9,695.5 1142.0,710.7 1143.1,695.5 1145.1,658.3 1145.4,658.3 1147.5,695.5 1148.6,710.7 1149.7,695.5 1151.8,658.3 1151.0,666.3" fill="none" stroke="#508642" stroke-width="1.0" stroke-linejoin="round" stroke-opacity="0.9"/>
<polygon points="654.0,656.3 654.0,656.3 662.0,656.3 667.2,657.3 670.4,663.6 673.6,657.3 679.8,657.3 683.0,667.0 686.2,657.3 692.9,657.3 696.1,667.0 699.3,657.3 706.0,657.3 709.2,682.1 712.4,657.3 712.9,657.3 716.1,659.9 719.3,657.3 719.1,657.3 722.2,684.6 725.3,657.3 725.6,657.3 728.8,663.6 732.0,657.3 731.9,657.3 735.0,687.2 738.0,657.3 738.5,657.3 741.7,663.9 744.9,657.3 744.8,657.3 747.9,680.1 751.0,657.3 751.3,657.3 754.5,667.6 757.7,657.3 757.7,657.3 760.9,680.1 764.1,657.3 764.1,657.3 767.2,671.6 770.4,657.3 770.8,657.3 774.0,680.1 777.2,657.3 777.1,657.3 780.1,673.9 783.2,657.3 783.6,657.3 786.8,668.6 790.0,657.3 789.8,657.3 792.9,673.7 796.0,657.3 798.6,657.3 801.8,664.4 805.0,657.3 803.9,657.3 806.0,675.6 808.0,657.3 811.5,657.3 814.7,664.6 817.9,657.3 816.9,657.3 819.0,676.3 821.2,657.3 824.6,657.3 827.8,664.9 831.0,657.3 829.9,657.3 832.1,676.3 834.2,657.3 835.8,657.3 839.0,659.5 842.2,657.3 842.1,657.3 845.1,670.6 848.2,657.3 848.2,657.3 851.3,669.8 854.4,657.3 854.7,657.3 857.9,670.7 861.1,657.3 861.0,657.3 864.0,670.0 867.1,657.3 867.6,657.3 870.8,670.5 874.0,657.3 874.0,657.3 877.1,670.5 880.3,657.3 880.7,657.3 883.9,671.2 887.1,657.3 886.9,657.3 890.0,670.8 893.1,657.3 893.3,657.3 896.5,671.0 899.7,657.3 899.8,657.3 903.0,673.5 906.2,657.3 906.4,657.3 909.6,671.3 912.8,657.3 912.9,657.3 916.1,672.0 919.3,657.3 919.5,657.3 922.7,671.7 925.9,657.3 925.7,657.3 928.8,671.9 931.9,657.3 932.2,657.3 935.4,672.1 938.6,657.3 938.7,657.3 941.9,672.3 945.1,657.3 945.1,657.3 948.3,672.5 951.5,657.3 951.7,657.3 954.9,672.6 958.1,657.3 958.0,657.3 961.1,672.8 964.2,657.3 964.5,657.3 967.7,673.5 970.9,657.3 970.8,657.3 973.9,673.2 976.9,657.3 977.4,657.3 980.6,673.4 983.8,657.3 983.8,657.3 986.9,675.6 990.1,657.3 990.6,657.3 993.8,676.1 997.0,657.3 996.9,657.3 1000.0,677.1 1003.1,657.3 1003.5,657.3 1006.7,676.9 1009.9,657.3 1009.8,657.3 1012.9,678.8 1016.0,657.3 1016.3,657.3 1019.5,678.2 1022.7,657.3 1022.8,657.3 1026.0,679.7 1029.2,657.3 1029.1,657.3 1032.3,680.8 1035.4,657.3 1035.5,657.3 1038.7,681.0 1041.9,657.3 1042.0,657.3 1045.2,681.3 1048.4,657.3 1048.6,657.3 1051.8,678.2 1055.0,657.3 1054.9,657.3 1057.9,683.8 1061.0,657.3 1061.3,657.3 1064.5,678.2 1067.7,657.3 1067.8,657.3 1071.0,684.9 1074.2,657.3 1074.4,657.3 1077.6,679.1 1080.8,657.3 1080.9,657.3 1084.1,683.2 1087.3,657.3 1087.5,657.3 1090.7,679.7 1093.9,657.3 1093.7,657.3 1096.8,685.5 1099.9,657.3 1100.4,657.3 1103.6,682.1 1106.8,657.3 1106.7,657.3 1109.9,688.5 1113.0,657.3 1113.1,657.3 1116.3,682.3 1119.5,657.3 1119.6,657.3 1122.8,692.0 1126.0,657.3 1125.9,657.3 1129.1,679.9 1132.2,657.3 1132.7,657.3 1135.9,692.4 1139.1,657.3 1138.9,657.3 1142.0,678.0 1145.1,657.3 1145.4,657.3 1148.6,678.2 1151.8,657.3 1151.0,662.3 1151.0,656.3" fill="#8a8f86" fill-opacity="0.35" stroke="none"/>
<polyline points="654.0,656.3 662.0,656.3 667.2,657.3 670.4,663.6 673.6,657.3 679.8,657.3 683.0,667.0 686.2,657.3 692.9,657.3 696.1,667.0 699.3,657.3 706.0,657.3 709.2,682.1 712.4,657.3 712.9,657.3 716.1,659.9 719.3,657.3 719.1,657.3 722.2,684.6 725.3,657.3 725.6,657.3 728.8,663.6 732.0,657.3 731.9,657.3 735.0,687.2 738.0,657.3 738.5,657.3 741.7,663.9 744.9,657.3 744.8,657.3 747.9,680.1 751.0,657.3 751.3,657.3 754.5,667.6 757.7,657.3 757.7,657.3 760.9,680.1 764.1,657.3 764.1,657.3 767.2,671.6 770.4,657.3 770.8,657.3 774.0,680.1 777.2,657.3 777.1,657.3 780.1,673.9 783.2,657.3 783.6,657.3 786.8,668.6 790.0,657.3 789.8,657.3 792.9,673.7 796.0,657.3 798.6,657.3 801.8,664.4 805.0,657.3 803.9,657.3 806.0,675.6 808.0,657.3 811.5,657.3 814.7,664.6 817.9,657.3 816.9,657.3 819.0,676.3 821.2,657.3 824.6,657.3 827.8,664.9 831.0,657.3 829.9,657.3 832.1,676.3 834.2,657.3 835.8,657.3 839.0,659.5 842.2,657.3 842.1,657.3 845.1,670.6 848.2,657.3 848.2,657.3 851.3,669.8 854.4,657.3 854.7,657.3 857.9,670.7 861.1,657.3 861.0,657.3 864.0,670.0 867.1,657.3 867.6,657.3 870.8,670.5 874.0,657.3 874.0,657.3 877.1,670.5 880.3,657.3 880.7,657.3 883.9,671.2 887.1,657.3 886.9,657.3 890.0,670.8 893.1,657.3 893.3,657.3 896.5,671.0 899.7,657.3 899.8,657.3 903.0,673.5 906.2,657.3 906.4,657.3 909.6,671.3 912.8,657.3 912.9,657.3 916.1,672.0 919.3,657.3 919.5,657.3 922.7,671.7 925.9,657.3 925.7,657.3 928.8,671.9 931.9,657.3 932.2,657.3 935.4,672.1 938.6,657.3 938.7,657.3 941.9,672.3 945.1,657.3 945.1,657.3 948.3,672.5 951.5,657.3 951.7,657.3 954.9,672.6 958.1,657.3 958.0,657.3 961.1,672.8 964.2,657.3 964.5,657.3 967.7,673.5 970.9,657.3 970.8,657.3 973.9,673.2 976.9,657.3 977.4,657.3 980.6,673.4 983.8,657.3 983.8,657.3 986.9,675.6 990.1,657.3 990.6,657.3 993.8,676.1 997.0,657.3 996.9,657.3 1000.0,677.1 1003.1,657.3 1003.5,657.3 1006.7,676.9 1009.9,657.3 1009.8,657.3 1012.9,678.8 1016.0,657.3 1016.3,657.3 1019.5,678.2 1022.7,657.3 1022.8,657.3 1026.0,679.7 1029.2,657.3 1029.1,657.3 1032.3,680.8 1035.4,657.3 1035.5,657.3 1038.7,681.0 1041.9,657.3 1042.0,657.3 1045.2,681.3 1048.4,657.3 1048.6,657.3 1051.8,678.2 1055.0,657.3 1054.9,657.3 1057.9,683.8 1061.0,657.3 1061.3,657.3 1064.5,678.2 1067.7,657.3 1067.8,657.3 1071.0,684.9 1074.2,657.3 1074.4,657.3 1077.6,679.1 1080.8,657.3 1080.9,657.3 1084.1,683.2 1087.3,657.3 1087.5,657.3 1090.7,679.7 1093.9,657.3 1093.7,657.3 1096.8,685.5 1099.9,657.3 1100.4,657.3 1103.6,682.1 1106.8,657.3 1106.7,657.3 1109.9,688.5 1113.0,657.3 1113.1,657.3 1116.3,682.3 1119.5,657.3 1119.6,657.3 1122.8,692.0 1126.0,657.3 1125.9,657.3 1129.1,679.9 1132.2,657.3 1132.7,657.3 1135.9,692.4 1139.1,657.3 1138.9,657.3 1142.0,678.0 1145.1,657.3 1145.4,657.3 1148.6,678.2 1151.8,657.3 1151.0,662.3" fill="none" stroke="#E5A8E2" stroke-width="1.1" stroke-linejoin="round" />
<line x1="654" y1="656.3" x2="1151" y2="656.3" stroke="#AEA2E0" stroke-width="1.4"/>
<line x1="1245" y1="150.5" x2="1742" y2="150.5" stroke="rgba(240,250,255,0.18)" stroke-width="1"/>
<text x="1239.0" y="154.0" text-anchor="end">40 Mb/s</text>
<line x1="1245" y1="174.5" x2="1742" y2="174.5" stroke="rgba(240,250,255,0.18)" stroke-width="1"/>
<text x="1239.0" y="177.9" text-anchor="end">30 Mb/s</text>
<line x1="1245" y1="198.5" x2="1742" y2="198.5" stroke="rgba(240,250,255,0.18)" stroke-width="1"/>
<text x="1239.0" y="201.7" text-anchor="end">20 Mb/s</text>
<line x1="1245" y1="222.5" x2="1742" y2="222.5" stroke="rgba(240,250,255,0.18)" stroke-width="1"/>
<text x="1239.0" y="225.6" text-anchor="end">10 Mb/s</text>
<line x1="1245" y1="245.5" x2="1742" y2="245.5" stroke="rgba(240,250,255,0.18)" stroke-width="1"/>
<text x="1239.0" y="249.4" text-anchor="end">0 kb/s</text>
<line x1="1254.5" y1="150.0" x2="1254.5" y2="246.0" stroke="rgba(240,250,255,0.18)" stroke-width="1"/>
<text x="1254.0" y="264.5" text-anchor="middle">15:30</text>
<line x1="1318.5" y1="150.0" x2="1318.5" y2="246.0" stroke="rgba(240,250,255,0.18)" stroke-width="1"/>
<text x="1318.5" y="264.5" text-anchor="middle">15:35</text>
<line x1="1383.5" y1="150.0" x2="1383.5" y2="246.0" stroke="rgba(240,250,255,0.18)" stroke-width="1"/>
<text x="1383.1" y="264.5" text-anchor="middle">15:40</text>
<line x1="1447.5" y1="150.0" x2="1447.5" y2="246.0" stroke="rgba(240,250,255,0.18)" stroke-width="1"/>
<text x="1447.6" y="264.5" text-anchor="middle">15:45</text>
<line x1="1512.5" y1="150.0" x2="1512.5" y2="246.0" stroke="rgba(240,250,255,0.18)" stroke-width="1"/>
<text x="1512.1" y="264.5" text-anchor="middle">15:50</text>
<line x1="1576.5" y1="150.0" x2="1576.5" y2="246.0" stroke="rgba(240,250,255,0.18)" stroke-width="1"/>
<text x="1576.6" y="264.5" text-anchor="middle">15:55</text>
<line x1="1641.5" y1="150.0" x2="1641.5" y2="246.0" stroke="rgba(240,250,255,0.18)" stroke-width="1"/>
<text x="1641.1" y="264.5" text-anchor="middle">16:00</text>
<line x1="1705.5" y1="150.0" x2="1705.5" y2="246.0" stroke="rgba(240,250,255,0.18)" stroke-width="1"/>
<text x="1705.7" y="264.5" text-anchor="middle">16:05</text>
<polygon points="1245.0,245.4 1245.0,246.0 1253.8,246.0 1255.6,237.7 1256.8,219.8 1257.8,202.7 1258.8,219.8 1260.2,237.7 1262.2,246.0 1266.9,246.0 1268.7,238.8 1269.9,223.4 1270.9,208.8 1271.9,223.4 1273.3,238.8 1275.3,246.0 1280.0,246.0 1281.8,240.7 1283.0,229.7 1284.0,219.2 1285.0,229.7 1286.4,240.7 1288.4,246.0 1295.0,246.0 1296.8,238.9 1298.0,223.6 1299.0,209.0 1300.0,223.6 1301.4,238.9 1303.4,246.0 1308.1,246.0 1309.9,238.6 1311.1,222.6 1312.1,207.5 1313.1,222.6 1314.5,238.6 1316.5,246.0 1321.0,246.0 1322.8,238.4 1324.0,222.0 1325.0,206.4 1326.0,222.0 1327.4,238.4 1329.4,246.0 1334.0,246.0 1335.8,239.2 1337.0,224.8 1338.0,211.0 1339.0,224.8 1340.4,239.2 1342.4,246.0 1346.9,246.0 1348.7,240.3 1349.9,228.4 1350.9,217.0 1351.9,228.4 1353.3,240.3 1355.3,246.0 1359.5,246.0 1361.7,240.7 1363.3,224.5 1364.3,225.6 1365.3,222.1 1366.5,232.6 1367.7,241.2 1369.7,246.0 1374.6,246.0 1376.4,239.1 1377.6,224.4 1378.6,210.4 1379.6,224.4 1381.0,239.1 1383.0,246.0 1387.7,246.0 1389.5,238.9 1390.7,223.8 1391.7,209.4 1392.7,223.8 1394.1,238.9 1396.1,246.0 1400.5,246.0 1402.3,239.3 1403.5,225.1 1404.5,211.6 1405.5,225.1 1406.9,239.3 1408.9,246.0 1413.6,246.0 1415.4,239.7 1416.6,226.3 1417.6,213.6 1418.6,226.3 1420.0,239.7 1422.0,246.0 1426.0,246.0 1430.0,242.6 1434.0,242.4 1439.0,242.6 1444.0,242.8 1449.0,242.7 1454.0,242.5 1459.0,242.4 1464.0,242.6 1469.0,242.8 1474.0,242.7 1479.0,242.5 1484.0,242.4 1489.0,242.6 1494.0,242.8 1499.0,242.7 1504.0,242.5 1509.0,242.4 1514.0,242.6 1519.0,242.8 1524.0,242.7 1529.0,242.4 1534.0,242.4 1539.0,242.7 1544.0,242.8 1549.0,242.6 1554.0,242.4 1559.0,242.5 1564.0,242.7 1569.0,242.8 1572.5,243.3 1574.3,241.6 1575.5,232.8 1576.5,224.3 1577.5,232.8 1578.9,241.6 1580.9,243.3 1586.8,243.3 1588.6,238.0 1590.0,231.5 1591.6,226.9 1592.6,234.3 1594.0,242.1 1596.0,243.3 1600.4,243.3 1602.2,240.7 1603.4,229.7 1604.4,219.2 1605.4,229.7 1606.8,240.7 1608.8,243.3 1613.4,243.3 1615.2,240.7 1616.4,229.7 1617.4,219.2 1618.4,229.7 1619.8,240.7 1621.8,243.3 1626.1,243.3 1627.9,239.9 1629.1,227.0 1630.1,214.7 1631.1,227.0 1632.5,239.9 1634.5,243.3 1639.1,243.3 1640.9,240.2 1642.1,228.0 1643.1,216.3 1644.1,228.0 1645.5,240.2 1647.5,243.3 1652.0,243.3 1653.8,241.0 1655.0,230.8 1656.0,221.0 1657.0,230.8 1658.4,241.0 1660.4,243.3 1666.1,243.3 1667.9,240.5 1668.8,229.1 1671.8,229.1 1672.9,240.5 1674.9,243.3 1679.8,243.3 1681.6,241.7 1682.8,233.2 1683.8,225.0 1684.8,233.2 1686.2,241.7 1688.2,243.3 1693.0,243.3 1694.8,241.0 1696.0,230.7 1697.0,220.9 1698.0,230.7 1699.4,241.0 1701.4,243.3 1705.8,243.3 1707.6,240.2 1708.8,228.0 1709.8,216.3 1710.8,228.0 1712.2,240.2 1714.2,243.3 1718.8,243.3 1720.6,240.4 1721.8,228.7 1722.8,217.5 1723.8,228.7 1725.2,240.4 1727.2,243.3 1730.0,243.3 1740.0,243.3 1740.0,245.4" fill="url(#g5)" stroke="none"/>
<polyline points="1245.0,246.0 1253.8,246.0 1255.6,237.7 1256.8,219.8 1257.8,202.7 1258.8,219.8 1260.2,237.7 1262.2,246.0 1266.9,246.0 1268.7,238.8 1269.9,223.4 1270.9,208.8 1271.9,223.4 1273.3,238.8 1275.3,246.0 1280.0,246.0 1281.8,240.7 1283.0,229.7 1284.0,219.2 1285.0,229.7 1286.4,240.7 1288.4,246.0 1295.0,246.0 1296.8,238.9 1298.0,223.6 1299.0,209.0 1300.0,223.6 1301.4,238.9 1303.4,246.0 1308.1,246.0 1309.9,238.6 1311.1,222.6 1312.1,207.5 1313.1,222.6 1314.5,238.6 1316.5,246.0 1321.0,246.0 1322.8,238.4 1324.0,222.0 1325.0,206.4 1326.0,222.0 1327.4,238.4 1329.4,246.0 1334.0,246.0 1335.8,239.2 1337.0,224.8 1338.0,211.0 1339.0,224.8 1340.4,239.2 1342.4,246.0 1346.9,246.0 1348.7,240.3 1349.9,228.4 1350.9,217.0 1351.9,228.4 1353.3,240.3 1355.3,246.0 1359.5,246.0 1361.7,240.7 1363.3,224.5 1364.3,225.6 1365.3,222.1 1366.5,232.6 1367.7,241.2 1369.7,246.0 1374.6,246.0 1376.4,239.1 1377.6,224.4 1378.6,210.4 1379.6,224.4 1381.0,239.1 1383.0,246.0 1387.7,246.0 1389.5,238.9 1390.7,223.8 1391.7,209.4 1392.7,223.8 1394.1,238.9 1396.1,246.0 1400.5,246.0 1402.3,239.3 1403.5,225.1 1404.5,211.6 1405.5,225.1 1406.9,239.3 1408.9,246.0 1413.6,246.0 1415.4,239.7 1416.6,226.3 1417.6,213.6 1418.6,226.3 1420.0,239.7 1422.0,246.0 1426.0,246.0 1430.0,242.6 1434.0,242.4 1439.0,242.6 1444.0,242.8 1449.0,242.7 1454.0,242.5 1459.0,242.4 1464.0,242.6 1469.0,242.8 1474.0,242.7 1479.0,242.5 1484.0,242.4 1489.0,242.6 1494.0,242.8 1499.0,242.7 1504.0,242.5 1509.0,242.4 1514.0,242.6 1519.0,242.8 1524.0,242.7 1529.0,242.4 1534.0,242.4 1539.0,242.7 1544.0,242.8 1549.0,242.6 1554.0,242.4 1559.0,242.5 1564.0,242.7 1569.0,242.8 1572.5,243.3 1574.3,241.6 1575.5,232.8 1576.5,224.3 1577.5,232.8 1578.9,241.6 1580.9,243.3 1586.8,243.3 1588.6,238.0 1590.0,231.5 1591.6,226.9 1592.6,234.3 1594.0,242.1 1596.0,243.3 1600.4,243.3 1602.2,240.7 1603.4,229.7 1604.4,219.2 1605.4,229.7 1606.8,240.7 1608.8,243.3 1613.4,243.3 1615.2,240.7 1616.4,229.7 1617.4,219.2 1618.4,229.7 1619.8,240.7 1621.8,243.3 1626.1,243.3 1627.9,239.9 1629.1,227.0 1630.1,214.7 1631.1,227.0 1632.5,239.9 1634.5,243.3 1639.1,243.3 1640.9,240.2 1642.1,228.0 1643.1,216.3 1644.1,228.0 1645.5,240.2 1647.5,243.3 1652.0,243.3 1653.8,241.0 1655.0,230.8 1656.0,221.0 1657.0,230.8 1658.4,241.0 1660.4,243.3 1666.1,243.3 1667.9,240.5 1668.8,229.1 1671.8,229.1 1672.9,240.5 1674.9,243.3 1679.8,243.3 1681.6,241.7 1682.8,233.2 1683.8,225.0 1684.8,233.2 1686.2,241.7 1688.2,243.3 1693.0,243.3 1694.8,241.0 1696.0,230.7 1697.0,220.9 1698.0,230.7 1699.4,241.0 1701.4,243.3 1705.8,243.3 1707.6,240.2 1708.8,228.0 1709.8,216.3 1710.8,228.0 1712.2,240.2 1714.2,243.3 1718.8,243.3 1720.6,240.4 1721.8,228.7 1722.8,217.5 1723.8,228.7 1725.2,240.4 1727.2,243.3 1730.0,243.3 1740.0,243.3" fill="none" stroke="#7EB26D" stroke-width="1.1" stroke-linejoin="round" />
<polyline points="1245.0,243.1 1253.8,243.1 1255.6,232.1 1256.8,201.2 1257.8,171.7 1258.8,201.2 1260.2,232.1 1262.2,243.1 1266.9,243.1 1268.7,234.0 1269.9,207.5 1270.9,182.3 1271.9,207.5 1273.3,234.0 1275.3,243.1 1280.0,243.1 1281.8,237.3 1283.0,218.3 1284.0,200.3 1285.0,218.3 1286.4,237.3 1288.4,243.1 1295.0,243.1 1296.8,234.1 1298.0,207.8 1299.0,182.7 1300.0,207.8 1301.4,234.1 1303.4,243.1 1308.1,243.1 1309.9,233.6 1311.1,206.2 1312.1,180.0 1313.1,206.2 1314.5,233.6 1316.5,243.1 1321.0,243.1 1322.8,233.3 1324.0,205.1 1325.0,178.2 1326.0,205.1 1327.4,233.3 1329.4,243.1 1334.0,243.1 1335.8,234.7 1337.0,209.8 1338.0,186.1 1339.0,209.8 1340.4,234.7 1342.4,243.1 1346.9,243.1 1348.7,236.6 1349.9,216.1 1350.9,196.5 1351.9,216.1 1353.3,236.6 1355.3,243.1 1359.5,243.1 1361.7,237.4 1363.3,209.3 1364.3,211.3 1365.3,205.3 1366.5,223.3 1367.7,238.2 1369.7,243.1 1374.6,243.1 1376.4,234.5 1377.6,209.2 1378.6,185.0 1379.6,209.2 1381.0,234.5 1383.0,243.1 1387.7,243.1 1389.5,234.2 1390.7,208.2 1391.7,183.4 1392.7,208.2 1394.1,234.2 1396.1,243.1 1400.5,243.1 1402.3,234.9 1403.5,210.5 1404.5,187.2 1405.5,210.5 1406.9,234.9 1408.9,243.1 1413.6,243.1 1415.4,235.5 1416.6,212.5 1417.6,190.6 1418.6,212.5 1420.0,235.5 1422.0,243.1 1426.0,243.1 1430.0,239.3 1434.0,239.1 1439.0,239.3 1444.0,239.5 1449.0,239.4 1454.0,239.2 1459.0,239.1 1464.0,239.3 1469.0,239.5 1474.0,239.4 1479.0,239.2 1484.0,239.1 1489.0,239.3 1494.0,239.5 1499.0,239.4 1504.0,239.2 1509.0,239.1 1514.0,239.3 1519.0,239.5 1524.0,239.4 1529.0,239.1 1534.0,239.1 1539.0,239.4 1544.0,239.5 1549.0,239.3 1554.0,239.1 1559.0,239.2 1564.0,239.4 1569.0,239.5 1572.5,240.0 1574.3,238.9 1575.5,223.6 1576.5,209.1 1577.5,223.6 1578.9,238.9 1580.9,240.0 1586.8,240.0 1588.6,232.6 1590.0,221.5 1591.6,213.5 1592.6,226.3 1594.0,239.7 1596.0,240.0 1600.4,240.0 1602.2,237.3 1603.4,218.3 1604.4,200.2 1605.4,218.3 1606.8,237.3 1608.8,240.0 1613.4,240.0 1615.2,237.3 1616.4,218.3 1617.4,200.2 1618.4,218.3 1619.8,237.3 1621.8,240.0 1626.1,240.0 1627.9,235.9 1629.1,213.6 1630.1,192.4 1631.1,213.6 1632.5,235.9 1634.5,240.0 1639.1,240.0 1640.9,236.4 1642.1,215.3 1643.1,195.3 1644.1,215.3 1645.5,236.4 1647.5,240.0 1652.0,240.0 1653.8,237.8 1655.0,220.2 1656.0,203.4 1657.0,220.2 1658.4,237.8 1660.4,240.0 1666.1,240.0 1667.9,237.0 1668.8,217.3 1671.8,217.3 1672.9,237.0 1674.9,240.0 1679.8,240.0 1681.6,239.1 1682.8,224.3 1683.8,210.3 1684.8,224.3 1686.2,239.1 1688.2,240.0 1693.0,240.0 1694.8,237.8 1696.0,220.0 1697.0,203.1 1698.0,220.0 1699.4,237.8 1701.4,240.0 1705.8,240.0 1707.6,236.4 1708.8,215.3 1709.8,195.3 1710.8,215.3 1712.2,236.4 1714.2,240.0 1718.8,240.0 1720.6,236.7 1721.8,216.5 1722.8,197.3 1723.8,216.5 1725.2,236.7 1727.2,240.0 1730.0,240.0 1740.0,240.0" fill="none" stroke="#EAB839" stroke-width="1.2" stroke-linejoin="round" />
<line x1="1246" y1="378.5" x2="1742" y2="378.5" stroke="rgba(240,250,255,0.18)" stroke-width="1"/>
<text x="1240.0" y="382.4" text-anchor="end">20 MB/s</text>
<line x1="1246" y1="407.5" x2="1742" y2="407.5" stroke="rgba(240,250,255,0.18)" stroke-width="1"/>
<text x="1240.0" y="410.7" text-anchor="end">15 MB/s</text>
<line x1="1246" y1="435.5" x2="1742" y2="435.5" stroke="rgba(240,250,255,0.18)" stroke-width="1"/>
<text x="1240.0" y="439.0" text-anchor="end">10 MB/s</text>
<line x1="1246" y1="463.5" x2="1742" y2="463.5" stroke="rgba(240,250,255,0.18)" stroke-width="1"/>
<text x="1240.0" y="467.2" text-anchor="end">5 MB/s</text>
<line x1="1246" y1="492.5" x2="1742" y2="492.5" stroke="rgba(240,250,255,0.18)" stroke-width="1"/>
<text x="1240.0" y="495.5" text-anchor="end">0 kB/s</text>
<line x1="1255.5" y1="378.0" x2="1255.5" y2="493.0" stroke="rgba(240,250,255,0.18)" stroke-width="1"/>
<text x="1255.0" y="510.5" text-anchor="middle">15:30</text>
<line x1="1319.5" y1="378.0" x2="1319.5" y2="493.0" stroke="rgba(240,250,255,0.18)" stroke-width="1"/>
<text x="1319.4" y="510.5" text-anchor="middle">15:35</text>
<line x1="1383.5" y1="378.0" x2="1383.5" y2="493.0" stroke="rgba(240,250,255,0.18)" stroke-width="1"/>
<text x="1383.8" y="510.5" text-anchor="middle">15:40</text>
<line x1="1448.5" y1="378.0" x2="1448.5" y2="493.0" stroke="rgba(240,250,255,0.18)" stroke-width="1"/>
<text x="1448.2" y="510.5" text-anchor="middle">15:45</text>
<line x1="1512.5" y1="378.0" x2="1512.5" y2="493.0" stroke="rgba(240,250,255,0.18)" stroke-width="1"/>
<text x="1512.6" y="510.5" text-anchor="middle">15:50</text>
<line x1="1576.5" y1="378.0" x2="1576.5" y2="493.0" stroke="rgba(240,250,255,0.18)" stroke-width="1"/>
<text x="1577.0" y="510.5" text-anchor="middle">15:55</text>
<line x1="1641.5" y1="378.0" x2="1641.5" y2="493.0" stroke="rgba(240,250,255,0.18)" stroke-width="1"/>
<text x="1641.3" y="510.5" text-anchor="middle">16:00</text>
<line x1="1705.5" y1="378.0" x2="1705.5" y2="493.0" stroke="rgba(240,250,255,0.18)" stroke-width="1"/>
<text x="1705.7" y="510.5" text-anchor="middle">16:05</text>
<polygon points="1246.1,491.6 1246.1,491.7 1256.9,491.3 1261.5,470.3 1263.9,490.6 1265.8,489.5 1268.1,490.9 1270.9,490.3 1274.0,459.0 1276.5,490.9 1278.7,489.2 1281.2,489.2 1282.9,491.3 1287.1,462.1 1289.6,490.9 1292.0,489.5 1294.1,489.5 1296.2,490.9 1300.0,429.6 1302.5,490.6 1306.4,485.3 1309.5,490.9 1313.0,423.3 1315.1,479.4 1316.8,489.2 1319.0,478.2 1321.8,490.6 1325.9,421.2 1328.1,475.2 1330.1,487.8 1332.2,478.2 1334.7,490.6 1338.7,438.3 1340.8,471.0 1342.7,490.6 1345.0,470.3 1348.3,491.3 1351.6,438.3 1354.4,468.1 1355.8,490.9 1358.0,460.4 1360.7,491.3 1364.3,441.1 1367.0,471.0 1368.7,490.6 1370.9,454.1 1374.3,490.9 1377.2,466.5 1379.3,466.7 1381.0,479.4 1383.8,454.1 1386.6,490.9 1392.2,467.0 1394.3,487.8 1396.6,448.9 1399.0,490.9 1404.8,467.0 1406.9,484.3 1409.3,447.1 1411.9,490.9 1417.7,470.3 1420.0,485.7 1422.4,446.4 1425.9,490.9 1430.1,485.3 1431.9,486.4 1434.6,462.5 1439.2,486.4 1441.6,465.1 1444.8,485.7 1448.0,462.3 1450.0,480.8 1452.5,486.4 1454.3,465.3 1458.5,490.6 1460.9,463.2 1464.4,486.4 1467.2,463.2 1471.4,490.6 1473.8,462.1 1477.8,485.7 1480.3,464.2 1484.1,490.6 1486.9,463.2 1490.0,486.7 1492.9,458.2 1497.3,491.0 1499.5,462.2 1503.9,486.7 1506.0,460.4 1510.4,491.0 1512.6,462.2 1516.2,483.7 1518.7,464.1 1523.2,491.0 1525.4,462.2 1529.1,485.9 1531.8,464.1 1535.9,488.8 1538.1,462.2 1541.0,482.3 1544.4,464.1 1549.1,489.6 1551.0,462.2 1554.2,483.0 1557.5,458.2 1561.9,489.9 1564.1,458.9 1567.3,483.0 1570.2,463.3 1575.0,489.9 1577.1,452.1 1581.1,485.9 1583.3,452.1 1587.4,489.9 1589.9,447.3 1593.8,483.7 1596.0,449.2 1600.1,489.9 1602.6,446.1 1606.7,482.6 1608.8,448.3 1613.7,489.9 1615.4,443.6 1619.8,480.8 1622.0,443.2 1626.3,490.7 1628.5,442.2 1632.6,477.9 1634.8,439.3 1639.0,490.7 1641.2,448.0 1645.3,474.3 1647.8,432.7 1651.9,490.7 1654.0,447.3 1656.2,474.3 1660.6,429.3 1664.7,490.7 1666.9,446.1 1669.1,480.5 1673.4,432.3 1677.8,490.7 1679.9,445.1 1682.2,479.4 1686.3,429.1 1690.6,490.7 1692.7,439.3 1695.3,480.8 1699.0,420.0 1703.2,490.7 1705.5,439.3 1708.0,480.8 1711.9,409.1 1716.3,490.7 1718.5,445.1 1720.4,479.4 1725.1,407.2 1729.1,490.7 1731.3,462.2 1735.7,490.7 1737.9,462.2 1740.5,478.6 1740.5,491.6" fill="url(#g6)" stroke="none"/>
<polyline points="1246.1,491.7 1256.9,491.3 1261.5,470.3 1263.9,490.6 1265.8,489.5 1268.1,490.9 1270.9,490.3 1274.0,459.0 1276.5,490.9 1278.7,489.2 1281.2,489.2 1282.9,491.3 1287.1,462.1 1289.6,490.9 1292.0,489.5 1294.1,489.5 1296.2,490.9 1300.0,429.6 1302.5,490.6 1306.4,485.3 1309.5,490.9 1313.0,423.3 1315.1,479.4 1316.8,489.2 1319.0,478.2 1321.8,490.6 1325.9,421.2 1328.1,475.2 1330.1,487.8 1332.2,478.2 1334.7,490.6 1338.7,438.3 1340.8,471.0 1342.7,490.6 1345.0,470.3 1348.3,491.3 1351.6,438.3 1354.4,468.1 1355.8,490.9 1358.0,460.4 1360.7,491.3 1364.3,441.1 1367.0,471.0 1368.7,490.6 1370.9,454.1 1374.3,490.9 1377.2,466.5 1379.3,466.7 1381.0,479.4 1383.8,454.1 1386.6,490.9 1392.2,467.0 1394.3,487.8 1396.6,448.9 1399.0,490.9 1404.8,467.0 1406.9,484.3 1409.3,447.1 1411.9,490.9 1417.7,470.3 1420.0,485.7 1422.4,446.4 1425.9,490.9 1430.1,485.3 1431.9,486.4 1434.6,462.5 1439.2,486.4 1441.6,465.1 1444.8,485.7 1448.0,462.3 1450.0,480.8 1452.5,486.4 1454.3,465.3 1458.5,490.6 1460.9,463.2 1464.4,486.4 1467.2,463.2 1471.4,490.6 1473.8,462.1 1477.8,485.7 1480.3,464.2 1484.1,490.6 1486.9,463.2 1490.0,486.7 1492.9,458.2 1497.3,491.0 1499.5,462.2 1503.9,486.7 1506.0,460.4 1510.4,491.0 1512.6,462.2 1516.2,483.7 1518.7,464.1 1523.2,491.0 1525.4,462.2 1529.1,485.9 1531.8,464.1 1535.9,488.8 1538.1,462.2 1541.0,482.3 1544.4,464.1 1549.1,489.6 1551.0,462.2 1554.2,483.0 1557.5,458.2 1561.9,489.9 1564.1,458.9 1567.3,483.0 1570.2,463.3 1575.0,489.9 1577.1,452.1 1581.1,485.9 1583.3,452.1 1587.4,489.9 1589.9,447.3 1593.8,483.7 1596.0,449.2 1600.1,489.9 1602.6,446.1 1606.7,482.6 1608.8,448.3 1613.7,489.9 1615.4,443.6 1619.8,480.8 1622.0,443.2 1626.3,490.7 1628.5,442.2 1632.6,477.9 1634.8,439.3 1639.0,490.7 1641.2,448.0 1645.3,474.3 1647.8,432.7 1651.9,490.7 1654.0,447.3 1656.2,474.3 1660.6,429.3 1664.7,490.7 1666.9,446.1 1669.1,480.5 1673.4,432.3 1677.8,490.7 1679.9,445.1 1682.2,479.4 1686.3,429.1 1690.6,490.7 1692.7,439.3 1695.3,480.8 1699.0,420.0 1703.2,490.7 1705.5,439.3 1708.0,480.8 1711.9,409.1 1716.3,490.7 1718.5,445.1 1720.4,479.4 1725.1,407.2 1729.1,490.7 1731.3,462.2 1735.7,490.7 1737.9,462.2 1740.5,478.6" fill="none" stroke="#EAB839" stroke-width="1.2" stroke-linejoin="round" />
<line x1="1246" y1="491.8" x2="1740" y2="491.8" stroke="#7EB26D" stroke-width="1.2"/>
<line x1="1229" y1="624.5" x2="1742" y2="624.5" stroke="rgba(240,250,255,0.18)" stroke-width="1"/>
<text x="1223.0" y="628.0" text-anchor="end">100%</text>
<line x1="1229" y1="670.5" x2="1742" y2="670.5" stroke="rgba(240,250,255,0.18)" stroke-width="1"/>
<text x="1223.0" y="674.0" text-anchor="end">75%</text>
<line x1="1229" y1="716.5" x2="1742" y2="716.5" stroke="rgba(240,250,255,0.18)" stroke-width="1"/>
<text x="1223.0" y="719.9" text-anchor="end">50%</text>
<line x1="1229" y1="762.5" x2="1742" y2="762.5" stroke="rgba(240,250,255,0.18)" stroke-width="1"/>
<text x="1223.0" y="765.8" text-anchor="end">25%</text>
<line x1="1229" y1="808.5" x2="1742" y2="808.5" stroke="rgba(240,250,255,0.18)" stroke-width="1"/>
<text x="1223.0" y="811.8" text-anchor="end">0%</text>
<line x1="1238.5" y1="606.0" x2="1238.5" y2="809.0" stroke="rgba(240,250,255,0.18)" stroke-width="1"/>
<text x="1238.3" y="826.5" text-anchor="middle">15:30</text>
<line x1="1304.5" y1="606.0" x2="1304.5" y2="809.0" stroke="rgba(240,250,255,0.18)" stroke-width="1"/>
<text x="1304.9" y="826.5" text-anchor="middle">15:35</text>
<line x1="1371.5" y1="606.0" x2="1371.5" y2="809.0" stroke="rgba(240,250,255,0.18)" stroke-width="1"/>
<text x="1371.5" y="826.5" text-anchor="middle">15:40</text>
<line x1="1438.5" y1="606.0" x2="1438.5" y2="809.0" stroke="rgba(240,250,255,0.18)" stroke-width="1"/>
<text x="1438.1" y="826.5" text-anchor="middle">15:45</text>
<line x1="1504.5" y1="606.0" x2="1504.5" y2="809.0" stroke="rgba(240,250,255,0.18)" stroke-width="1"/>
<text x="1504.7" y="826.5" text-anchor="middle">15:50</text>
<line x1="1571.5" y1="606.0" x2="1571.5" y2="809.0" stroke="rgba(240,250,255,0.18)" stroke-width="1"/>
<text x="1571.3" y="826.5" text-anchor="middle">15:55</text>
<line x1="1637.5" y1="606.0" x2="1637.5" y2="809.0" stroke="rgba(240,250,255,0.18)" stroke-width="1"/>
<text x="1637.9" y="826.5" text-anchor="middle">16:00</text>
<line x1="1704.5" y1="606.0" x2="1704.5" y2="809.0" stroke="rgba(240,250,255,0.18)" stroke-width="1"/>
<text x="1704.5" y="826.5" text-anchor="middle">16:05</text>
<polygon points="1229.0,807.8 1229.0,807.8 1240.0,807.8 1242.0,807.3 1244.6,794.2 1247.2,807.3 1248.9,807.3 1251.5,806.4 1254.1,807.3 1255.4,807.3 1258.0,790.2 1260.6,807.3 1262.2,807.3 1264.8,803.1 1267.4,807.3 1268.9,807.3 1271.5,791.2 1274.1,807.3 1275.6,807.3 1278.2,803.8 1280.8,807.3 1282.2,807.3 1284.8,776.3 1287.4,807.3 1288.8,807.3 1291.4,799.1 1294.0,807.3 1295.4,807.3 1298.0,777.1 1300.6,807.3 1302.2,807.3 1304.8,793.9 1307.4,807.3 1308.9,807.3 1311.5,776.3 1314.1,807.3 1315.4,807.3 1318.0,793.9 1320.6,807.3 1322.3,807.3 1324.9,782.3 1327.5,807.3 1328.8,807.3 1331.4,791.2 1334.0,807.3 1335.7,807.3 1338.3,782.3 1340.9,807.3 1342.2,807.3 1344.8,789.3 1347.4,807.3 1348.7,807.3 1351.3,782.6 1353.9,807.3 1355.4,807.3 1358.0,788.2 1360.6,807.3 1362.1,807.3 1364.7,794.2 1367.3,807.3 1368.8,807.3 1371.4,789.4 1374.0,807.3 1375.5,807.3 1378.1,799.4 1380.7,807.3 1382.2,807.3 1384.8,788.2 1387.4,807.3 1388.9,807.3 1391.5,801.6 1394.1,807.3 1395.6,807.3 1398.2,788.2 1400.8,807.3 1402.2,807.3 1404.8,801.3 1407.4,807.3 1408.9,807.3 1411.5,789.3 1414.1,807.3 1415.6,807.3 1418.2,799.1 1420.8,807.3 1422.3,807.3 1424.9,792.0 1427.5,807.3 1429.0,807.3 1431.6,793.0 1434.2,807.3 1435.7,807.3 1438.3,792.0 1440.9,807.3 1442.4,807.3 1445.0,793.9 1447.6,807.3 1448.8,807.3 1451.4,793.0 1454.0,807.3 1455.5,807.3 1458.1,792.0 1460.7,807.3 1462.1,807.3 1464.7,792.0 1467.3,807.3 1468.8,807.3 1471.4,793.9 1474.0,807.3 1475.5,807.3 1478.1,793.0 1480.7,807.3 1482.2,807.3 1484.8,788.2 1487.4,807.3 1488.6,807.3 1491.2,792.0 1493.8,807.3 1495.5,807.3 1498.1,791.2 1500.7,807.3 1502.2,807.3 1504.8,793.0 1507.4,807.3 1508.9,807.3 1511.5,793.4 1514.1,807.3 1515.4,807.3 1518.0,792.4 1520.6,807.3 1522.2,807.3 1524.8,792.0 1527.4,807.3 1528.8,807.3 1531.4,793.9 1534.0,807.3 1535.5,807.3 1538.1,792.4 1540.7,807.3 1542.2,807.3 1544.8,793.4 1547.4,807.3 1548.5,807.3 1551.1,787.5 1553.7,807.3 1555.2,807.3 1557.8,791.2 1560.4,807.3 1561.9,807.3 1564.5,792.4 1567.1,807.3 1568.6,807.3 1571.2,788.2 1573.8,807.3 1575.3,807.3 1577.9,783.0 1580.5,807.3 1582.0,807.3 1584.6,783.0 1587.2,807.3 1588.7,807.3 1591.3,785.6 1593.9,807.3 1595.4,807.3 1598.0,785.3 1600.6,807.3 1602.0,807.3 1604.6,784.5 1607.2,807.3 1608.4,807.3 1611.0,784.1 1613.6,807.3 1615.1,807.3 1617.7,780.1 1620.3,807.3 1621.8,807.3 1624.4,785.6 1627.0,807.3 1628.5,807.3 1631.1,784.5 1633.7,807.3 1635.2,807.3 1637.8,785.3 1640.4,807.3 1641.9,807.3 1644.5,785.3 1647.1,807.3 1648.4,807.3 1651.0,785.6 1653.6,807.3 1655.3,807.3 1657.9,784.2 1660.5,807.3 1661.8,807.3 1664.4,784.2 1667.0,807.3 1668.5,807.3 1671.1,786.8 1673.7,807.3 1675.2,807.3 1677.8,785.0 1680.4,807.3 1681.9,807.3 1684.5,783.0 1687.1,807.3 1688.6,807.3 1691.2,782.3 1693.8,807.3 1695.2,807.3 1697.8,785.3 1700.4,807.3 1701.9,807.3 1704.5,781.6 1707.1,807.3 1708.6,807.3 1711.2,785.6 1713.8,807.3 1715.3,807.3 1717.9,784.5 1720.5,807.3 1722.0,807.3 1724.6,786.0 1727.2,807.3 1728.4,807.3 1731.0,792.7 1733.6,807.3 1735.1,807.3 1737.7,793.4 1740.3,807.3 1740.3,804.8 1740.3,807.8" fill="url(#g7)" stroke="none"/>
<polyline points="1229.0,807.8 1240.0,807.8 1242.0,807.3 1244.6,794.2 1247.2,807.3 1248.9,807.3 1251.5,806.4 1254.1,807.3 1255.4,807.3 1258.0,790.2 1260.6,807.3 1262.2,807.3 1264.8,803.1 1267.4,807.3 1268.9,807.3 1271.5,791.2 1274.1,807.3 1275.6,807.3 1278.2,803.8 1280.8,807.3 1282.2,807.3 1284.8,776.3 1287.4,807.3 1288.8,807.3 1291.4,799.1 1294.0,807.3 1295.4,807.3 1298.0,777.1 1300.6,807.3 1302.2,807.3 1304.8,793.9 1307.4,807.3 1308.9,807.3 1311.5,776.3 1314.1,807.3 1315.4,807.3 1318.0,793.9 1320.6,807.3 1322.3,807.3 1324.9,782.3 1327.5,807.3 1328.8,807.3 1331.4,791.2 1334.0,807.3 1335.7,807.3 1338.3,782.3 1340.9,807.3 1342.2,807.3 1344.8,789.3 1347.4,807.3 1348.7,807.3 1351.3,782.6 1353.9,807.3 1355.4,807.3 1358.0,788.2 1360.6,807.3 1362.1,807.3 1364.7,794.2 1367.3,807.3 1368.8,807.3 1371.4,789.4 1374.0,807.3 1375.5,807.3 1378.1,799.4 1380.7,807.3 1382.2,807.3 1384.8,788.2 1387.4,807.3 1388.9,807.3 1391.5,801.6 1394.1,807.3 1395.6,807.3 1398.2,788.2 1400.8,807.3 1402.2,807.3 1404.8,801.3 1407.4,807.3 1408.9,807.3 1411.5,789.3 1414.1,807.3 1415.6,807.3 1418.2,799.1 1420.8,807.3 1422.3,807.3 1424.9,792.0 1427.5,807.3 1429.0,807.3 1431.6,793.0 1434.2,807.3 1435.7,807.3 1438.3,792.0 1440.9,807.3 1442.4,807.3 1445.0,793.9 1447.6,807.3 1448.8,807.3 1451.4,793.0 1454.0,807.3 1455.5,807.3 1458.1,792.0 1460.7,807.3 1462.1,807.3 1464.7,792.0 1467.3,807.3 1468.8,807.3 1471.4,793.9 1474.0,807.3 1475.5,807.3 1478.1,793.0 1480.7,807.3 1482.2,807.3 1484.8,788.2 1487.4,807.3 1488.6,807.3 1491.2,792.0 1493.8,807.3 1495.5,807.3 1498.1,791.2 1500.7,807.3 1502.2,807.3 1504.8,793.0 1507.4,807.3 1508.9,807.3 1511.5,793.4 1514.1,807.3 1515.4,807.3 1518.0,792.4 1520.6,807.3 1522.2,807.3 1524.8,792.0 1527.4,807.3 1528.8,807.3 1531.4,793.9 1534.0,807.3 1535.5,807.3 1538.1,792.4 1540.7,807.3 1542.2,807.3 1544.8,793.4 1547.4,807.3 1548.5,807.3 1551.1,787.5 1553.7,807.3 1555.2,807.3 1557.8,791.2 1560.4,807.3 1561.9,807.3 1564.5,792.4 1567.1,807.3 1568.6,807.3 1571.2,788.2 1573.8,807.3 1575.3,807.3 1577.9,783.0 1580.5,807.3 1582.0,807.3 1584.6,783.0 1587.2,807.3 1588.7,807.3 1591.3,785.6 1593.9,807.3 1595.4,807.3 1598.0,785.3 1600.6,807.3 1602.0,807.3 1604.6,784.5 1607.2,807.3 1608.4,807.3 1611.0,784.1 1613.6,807.3 1615.1,807.3 1617.7,780.1 1620.3,807.3 1621.8,807.3 1624.4,785.6 1627.0,807.3 1628.5,807.3 1631.1,784.5 1633.7,807.3 1635.2,807.3 1637.8,785.3 1640.4,807.3 1641.9,807.3 1644.5,785.3 1647.1,807.3 1648.4,807.3 1651.0,785.6 1653.6,807.3 1655.3,807.3 1657.9,784.2 1660.5,807.3 1661.8,807.3 1664.4,784.2 1667.0,807.3 1668.5,807.3 1671.1,786.8 1673.7,807.3 1675.2,807.3 1677.8,785.0 1680.4,807.3 1681.9,807.3 1684.5,783.0 1687.1,807.3 1688.6,807.3 1691.2,782.3 1693.8,807.3 1695.2,807.3 1697.8,785.3 1700.4,807.3 1701.9,807.3 1704.5,781.6 1707.1,807.3 1708.6,807.3 1711.2,785.6 1713.8,807.3 1715.3,807.3 1717.9,784.5 1720.5,807.3 1722.0,807.3 1724.6,786.0 1727.2,807.3 1728.4,807.3 1731.0,792.7 1733.6,807.3 1735.1,807.3 1737.7,793.4 1740.3,807.3 1740.3,804.8" fill="none" stroke="#6ED0E0" stroke-width="1.0" stroke-linejoin="round" />
<polyline points="1229.0,807.8 1240.0,807.8 1242.0,807.3 1244.6,794.5 1247.2,807.3 1248.9,807.3 1251.5,806.4 1254.1,807.3 1255.4,807.3 1258.0,790.5 1260.6,807.3 1262.2,807.3 1264.8,803.2 1267.4,807.3 1268.9,807.3 1271.5,791.5 1274.1,807.3 1275.6,807.3 1278.2,803.9 1280.8,807.3 1282.2,807.3 1284.8,777.0 1287.4,807.3 1288.8,807.3 1291.4,799.3 1294.0,807.3 1295.4,807.3 1298.0,777.7 1300.6,807.3 1302.2,807.3 1304.8,794.2 1307.4,807.3 1308.9,807.3 1311.5,777.0 1314.1,807.3 1315.4,807.3 1318.0,794.2 1320.6,807.3 1322.3,807.3 1324.9,782.8 1327.5,807.3 1328.8,807.3 1331.4,791.5 1334.0,807.3 1335.7,807.3 1338.3,782.8 1340.9,807.3 1342.2,807.3 1344.8,789.7 1347.4,807.3 1348.7,807.3 1351.3,783.1 1353.9,807.3 1355.4,807.3 1358.0,788.6 1360.6,807.3 1362.1,807.3 1364.7,794.5 1367.3,807.3 1368.8,807.3 1371.4,789.8 1374.0,807.3 1375.5,807.3 1378.1,799.6 1380.7,807.3 1382.2,807.3 1384.8,788.6 1387.4,807.3 1388.9,807.3 1391.5,801.7 1394.1,807.3 1395.6,807.3 1398.2,788.6 1400.8,807.3 1402.2,807.3 1404.8,801.4 1407.4,807.3 1408.9,807.3 1411.5,789.7 1414.1,807.3 1415.6,807.3 1418.2,799.3 1420.8,807.3 1422.3,807.3 1424.9,792.3 1427.5,807.3 1429.0,807.3 1431.6,793.3 1434.2,807.3 1435.7,807.3 1438.3,792.3 1440.9,807.3 1442.4,807.3 1445.0,794.2 1447.6,807.3 1448.8,807.3 1451.4,793.3 1454.0,807.3 1455.5,807.3 1458.1,792.3 1460.7,807.3 1462.1,807.3 1464.7,792.3 1467.3,807.3 1468.8,807.3 1471.4,794.2 1474.0,807.3 1475.5,807.3 1478.1,793.3 1480.7,807.3 1482.2,807.3 1484.8,788.6 1487.4,807.3 1488.6,807.3 1491.2,792.3 1493.8,807.3 1495.5,807.3 1498.1,791.5 1500.7,807.3 1502.2,807.3 1504.8,793.3 1507.4,807.3 1508.9,807.3 1511.5,793.7 1514.1,807.3 1515.4,807.3 1518.0,792.7 1520.6,807.3 1522.2,807.3 1524.8,792.3 1527.4,807.3 1528.8,807.3 1531.4,794.2 1534.0,807.3 1535.5,807.3 1538.1,792.7 1540.7,807.3 1542.2,807.3 1544.8,793.7 1547.4,807.3 1548.5,807.3 1551.1,787.9 1553.7,807.3 1555.2,807.3 1557.8,791.5 1560.4,807.3 1561.9,807.3 1564.5,792.7 1567.1,807.3 1568.6,807.3 1571.2,788.6 1573.8,807.3 1575.3,807.3 1577.9,783.5 1580.5,807.3 1582.0,807.3 1584.6,783.5 1587.2,807.3 1588.7,807.3 1591.3,786.0 1593.9,807.3 1595.4,807.3 1598.0,785.7 1600.6,807.3 1602.0,807.3 1604.6,785.0 1607.2,807.3 1608.4,807.3 1611.0,784.6 1613.6,807.3 1615.1,807.3 1617.7,780.6 1620.3,807.3 1621.8,807.3 1624.4,786.0 1627.0,807.3 1628.5,807.3 1631.1,785.0 1633.7,807.3 1635.2,807.3 1637.8,785.7 1640.4,807.3 1641.9,807.3 1644.5,785.7 1647.1,807.3 1648.4,807.3 1651.0,786.0 1653.6,807.3 1655.3,807.3 1657.9,784.7 1660.5,807.3 1661.8,807.3 1664.4,784.7 1667.0,807.3 1668.5,807.3 1671.1,787.2 1673.7,807.3 1675.2,807.3 1677.8,785.4 1680.4,807.3 1681.9,807.3 1684.5,783.5 1687.1,807.3 1688.6,807.3 1691.2,782.8 1693.8,807.3 1695.2,807.3 1697.8,785.7 1700.4,807.3 1701.9,807.3 1704.5,782.1 1707.1,807.3 1708.6,807.3 1711.2,786.0 1713.8,807.3 1715.3,807.3 1717.9,785.0 1720.5,807.3 1722.0,807.3 1724.6,786.4 1727.2,807.3 1728.4,807.3 1731.0,793.0 1733.6,807.3 1735.1,807.3 1737.7,793.7 1740.3,807.3 1740.3,804.8" fill="none" stroke="#EF843C" stroke-width="1.2" stroke-linejoin="round" />
<polyline points="1229.0,807.8 1240.0,807.8 1241.4,807.3 1244.6,804.8 1247.8,807.3 1248.3,807.3 1251.5,807.5 1254.7,807.3 1254.8,807.3 1258.0,803.9 1261.2,807.3 1261.6,807.3 1264.8,806.8 1268.0,807.3 1268.3,807.3 1271.5,804.2 1274.7,807.3 1275.0,807.3 1278.2,806.9 1281.4,807.3 1281.6,807.3 1284.8,800.9 1288.0,807.3 1288.2,807.3 1291.4,805.9 1294.6,807.3 1294.8,807.3 1298.0,801.0 1301.2,807.3 1301.6,807.3 1304.8,804.7 1308.0,807.3 1308.3,807.3 1311.5,800.9 1314.7,807.3 1314.8,807.3 1318.0,804.7 1321.2,807.3 1321.7,807.3 1324.9,802.2 1328.1,807.3 1328.2,807.3 1331.4,804.2 1334.6,807.3 1335.1,807.3 1338.3,802.2 1341.5,807.3 1341.6,807.3 1344.8,803.7 1348.0,807.3 1348.1,807.3 1351.3,802.3 1354.5,807.3 1354.8,807.3 1358.0,803.5 1361.2,807.3 1361.5,807.3 1364.7,804.8 1367.9,807.3 1368.2,807.3 1371.4,803.8 1374.6,807.3 1374.9,807.3 1378.1,805.9 1381.3,807.3 1381.6,807.3 1384.8,803.5 1388.0,807.3 1388.3,807.3 1391.5,806.4 1394.7,807.3 1395.0,807.3 1398.2,803.5 1401.4,807.3 1401.6,807.3 1404.8,806.4 1408.0,807.3 1408.3,807.3 1411.5,803.7 1414.7,807.3 1415.0,807.3 1418.2,805.9 1421.4,807.3 1421.7,807.3 1424.9,804.3 1428.1,807.3 1428.4,807.3 1431.6,804.5 1434.8,807.3 1435.1,807.3 1438.3,804.3 1441.5,807.3 1441.8,807.3 1445.0,804.7 1448.2,807.3 1448.2,807.3 1451.4,804.5 1454.6,807.3 1454.9,807.3 1458.1,804.3 1461.3,807.3 1461.5,807.3 1464.7,804.3 1467.9,807.3 1468.2,807.3 1471.4,804.7 1474.6,807.3 1474.9,807.3 1478.1,804.5 1481.3,807.3 1481.6,807.3 1484.8,803.5 1488.0,807.3 1488.0,807.3 1491.2,804.3 1494.4,807.3 1494.9,807.3 1498.1,804.2 1501.3,807.3 1501.6,807.3 1504.8,804.5 1508.0,807.3 1508.3,807.3 1511.5,804.6 1514.7,807.3 1514.8,807.3 1518.0,804.4 1521.2,807.3 1521.6,807.3 1524.8,804.3 1528.0,807.3 1528.2,807.3 1531.4,804.7 1534.6,807.3 1534.9,807.3 1538.1,804.4 1541.3,807.3 1541.6,807.3 1544.8,804.6 1548.0,807.3 1547.9,807.3 1551.1,803.3 1554.3,807.3 1554.6,807.3 1557.8,804.2 1561.0,807.3 1561.3,807.3 1564.5,804.4 1567.7,807.3 1568.0,807.3 1571.2,803.5 1574.4,807.3 1574.7,807.3 1577.9,802.4 1581.1,807.3 1581.4,807.3 1584.6,802.4 1587.8,807.3 1588.1,807.3 1591.3,802.9 1594.5,807.3 1594.8,807.3 1598.0,802.8 1601.2,807.3 1601.4,807.3 1604.6,802.7 1607.8,807.3 1607.8,807.3 1611.0,802.6 1614.2,807.3 1614.5,807.3 1617.7,801.7 1620.9,807.3 1621.2,807.3 1624.4,802.9 1627.6,807.3 1627.9,807.3 1631.1,802.7 1634.3,807.3 1634.6,807.3 1637.8,802.8 1641.0,807.3 1641.3,807.3 1644.5,802.8 1647.7,807.3 1647.8,807.3 1651.0,802.9 1654.2,807.3 1654.7,807.3 1657.9,802.6 1661.1,807.3 1661.2,807.3 1664.4,802.6 1667.6,807.3 1667.9,807.3 1671.1,803.2 1674.3,807.3 1674.6,807.3 1677.8,802.8 1681.0,807.3 1681.3,807.3 1684.5,802.4 1687.7,807.3 1688.0,807.3 1691.2,802.2 1694.4,807.3 1694.6,807.3 1697.8,802.8 1701.0,807.3 1701.3,807.3 1704.5,802.0 1707.7,807.3 1708.0,807.3 1711.2,802.9 1714.4,807.3 1714.7,807.3 1717.9,802.7 1721.1,807.3 1721.4,807.3 1724.6,803.0 1727.8,807.3 1727.8,807.3 1731.0,804.5 1734.2,807.3 1734.5,807.3 1737.7,804.6 1740.9,807.3 1740.3,804.8" fill="none" stroke="#890F02" stroke-width="1.4" stroke-linejoin="round" />
<line x1="1229" y1="807.6" x2="1740" y2="807.6" stroke="#EF843C" stroke-width="1.3"/>
</svg>
<div class="leg" style="left:25px;top:314px;height:36px;width:552px"><div class="lr"><span class="li"><i style="background:#7EB26D"></i><u>put container</u><b>Max: 2.82 K</b><b>Avg: 205</b><b>Total: 47.5 K</b></span></div><div class="lr"><span class="li"><i style="background:#EAB839"></i><u>put account</u><b>Max: 52.2</b><b>Avg: 1.20</b><b>Total: 278</b></span></div></div><div class="leg" style="left:25px;top:618px;height:36px;width:552px"><div class="lr"><span class="li"><i style="background:#7EB26D"></i><u>head account</u><b>Max: 2.80</b><b>Avg: 0.163</b><b>Total: 37.8</b></span></div><div class="lr"><span class="li"><i style="background:#EAB839"></i><u>head container</u><b>Max: 1.33</b><b>Avg: 0.0961</b><b>Total: 22.3</b></span></div></div><div class="leg" style="left:25px;top:922px;height:36px;width:552px"><div class="lr"><span class="li"><i style="background:#7EB26D"></i><u>delete containers</u><b>Max: 2.08 K</b><b>Avg: 145</b><b>Total: 33.6 K</b></span></div><div class="lr"><span class="li"><i style="background:#EAB839"></i><u>delete containers</u><b>Max: 2.08 K</b><b>Avg: 145</b><b>Total: 33.6 K</b></span></div></div><div class="leg" style="left:615px;top:276px;height:36px;width:552px"><div class="lr"><span class="li"><i style="background:#7EB26D"></i><u>User</u><b>Min: 0.0625%</b><b>Avg: 1.78%</b></span><span class="li"><i style="background:#EAB839"></i><u>System</u><b>Min: 0.111%</b><b>Avg: 1.59%</b></span></div><div class="lr"><span class="li"><i style="background:#6ED0E0"></i><u>Iowait</u><b>Min: 0.000946%</b><b>Avg: 0.00303%</b></span><span class="li"><i style="background:#EF843C"></i><u>idle</u><b>Min: 81.5%</b><b>Avg: 96.4%</b></span></div></div><div class="leg" style="left:615px;top:487px;height:54px;width:552px"><div class="lr"><span class="li"><i style="background:#7EB26D"></i><u>Used</u><b>Min: 7.78 GB</b><b>Max: 9.80 GB</b><b>Avg: 8.84 GB</b></span></div><div class="lr"><span class="li"><i style="background:#EAB839"></i><u>Cached</u><b>Min: 6.43 GB</b><b>Max: 6.86 GB</b><b>Avg: 6.65 GB</b></span></div><div class="lr"><span class="li"><i style="background:#6ED0E0"></i><u>Buffers</u><b>Min: 411 MB</b><b>Max: 416 MB</b><b>Avg: 414 MB</b></span></div></div><div class="leg" style="left:615px;top:838px;height:119px;width:552px"><div class="lr"><span class="li"><i style="background:#7EB26D"></i><u>sdb-w</u><b>Avg: -106</b></span><span class="li"><i style="background:#EAB839"></i><u>sdc-w</u><b>Avg: -107</b></span><span class="li"><i style="background:#6ED0E0"></i><u>sdd-w</u><b>Avg: -107</b></span><span class="li"><i style="background:#EF843C"></i><u>sde-w</u><b>Avg: 0</b></span></div><div class="lr"><span class="li"><i style="background:#E24D42"></i><u>sdf-w</u><b>Avg: 0</b></span><span class="li"><i style="background:#1F78C1"></i><u>sdg-w</u><b>Avg: 0</b></span><span class="li"><i style="background:#BA43A9"></i><u>sdb-r</u><b>Avg: 0.000431</b></span><span class="li"><i style="background:#705DA0"></i><u>sdc-r</u><b>Avg: 0.000431</b></span></div><div class="lr"><span class="li"><i style="background:#508642"></i><u>sdd-r</u><b>Avg: 0.000431</b></span><span class="li"><i style="background:#CCA300"></i><u>sde-r</u><b>Avg: 0.000431</b></span><span class="li"><i style="background:#447EBC"></i><u>sdf-r</u><b>Avg: 0.000431</b></span></div><div class="lr"><span class="li"><i style="background:#C15C17"></i><u>sdg-r</u><b>Avg: 0.000431</b></span><span class="li"><i style="background:#890F02"></i><u>sdh-r</u><b>Avg: 0.000431</b></span><span class="li"><i style="background:#0A437C"></i><u>sdi-r</u><b>Avg: 0.000431</b></span></div><div class="lr"><span class="li"><i style="background:#6D1F62"></i><u>sdj-r</u><b>Avg: 0.000431</b></span><span class="li"><i style="background:#584477"></i><u>sdk-r</u><b>Avg: 0.000431</b></span><span class="li"><i style="background:#B7DBAB"></i><u>sdl-r</u><b>Avg: 0.000431</b></span><span class="li"><i style="background:#F4D598"></i><u>sdh-w</u><b>Avg: 0</b></span></div><div class="lr"><span class="li"><i style="background:#70DBED"></i><u>sdi-w</u><b>Avg: 0</b></span><span class="li"><i style="background:#F9BA8F"></i><u>sdj-w</u><b>Avg: 0</b></span><span class="li"><i style="background:#F29191"></i><u>sdk-w</u><b>Avg: 0</b></span><span class="li"><i style="background:#82B5D8"></i><u>sdl-w</u><b>Avg: 0</b></span><span class="li"><i style="background:#E5A8E2"></i><u>Mean-W</u><b>Avg: -29</b></span></div><div class="lr"><span class="li"><i style="background:#AEA2E0"></i><u>Mean-R</u><b>Avg: 0.000431</b></span></div></div><div class="leg" style="left:1204px;top:276px;height:36px;width:552px"><div class="lr"><span class="li"><i style="background:#7EB26D"></i><u>recieved</u><b>Min: 8.47 kb/s</b><b>Max: 21.0 Mb/s</b><b>Avg: 2.54 Mb/s</b></span></div><div class="lr"><span class="li"><i style="background:#EAB839"></i><u>sent</u><b>Min: 958 kb/s</b><b>Max: 10.0 Mb/s</b><b>Avg: 2.17 Mb/s</b></span></div></div><div class="leg" style="left:1204px;top:522px;height:18px;width:552px"><div class="lr"><span class="li"><i style="background:#7EB26D"></i><u>Read</u><b>Max: 0 kB/s</b><b>Avg: 0 kB/s</b></span><span class="li"><i style="background:#EAB839"></i><u>Write</u><b>Max: 14.8 MB/s</b><b>Avg: 3.00 MB/s</b></span></div></div><div class="leg" style="left:1204px;top:838px;height:119px;width:552px"><div class="lr"><span class="li"><i style="background:#7EB26D"></i><u>sda</u><b>Max: 0.0400%</b><b>Avg: 0.000172%</b></span><span class="li"><i style="background:#EAB839"></i><u>sdb</u><b>Max: 17.3%</b><b>Avg: 3.81%</b></span></div><div class="lr"><span class="li"><i style="background:#6ED0E0"></i><u>sdc</u><b>Max: 17.2%</b><b>Avg: 3.81%</b></span><span class="li"><i style="background:#EF843C"></i><u>sdd</u><b>Max: 16.9%</b><b>Avg: 3.80%</b></span></div><div class="lr"><span class="li"><i style="background:#E24D42"></i><u>sde</u><b>Max: 0.0400%</b><b>Avg: 0.000172%</b></span><span class="li"><i style="background:#1F78C1"></i><u>sdf</u><b>Max: 0.0400%</b><b>Avg: 0.000172%</b></span></div><div class="lr"><span class="li"><i style="background:#BA43A9"></i><u>sdg</u><b>Max: 0.0400%</b><b>Avg: 0.000172%</b></span><span class="li"><i style="background:#705DA0"></i><u>sdh</u><b>Max: 0.0400%</b><b>Avg: 0.000172%</b></span></div><div class="lr"><span class="li"><i style="background:#508642"></i><u>sdi</u><b>Max: 0.0400%</b><b>Avg: 0.000172%</b></span><span class="li"><i style="background:#CCA300"></i><u>sdj</u><b>Max: 0.0400%</b><b>Avg: 0.000172%</b></span></div><div class="lr"><span class="li"><i style="background:#447EBC"></i><u>sdk</u><b>Max: 0.0400%</b><b>Avg: 0.000172%</b></span><span class="li"><i style="background:#C15C17"></i><u>sdl</u><b>Max: 0.0400%</b><b>Avg: 0.000172%</b></span></div><div class="lr"><span class="li"><i style="background:#890F02"></i><u>Mean</u><b>Max: 4.66%</b><b>Avg: 1.04%</b></span></div></div>
</body></html>
